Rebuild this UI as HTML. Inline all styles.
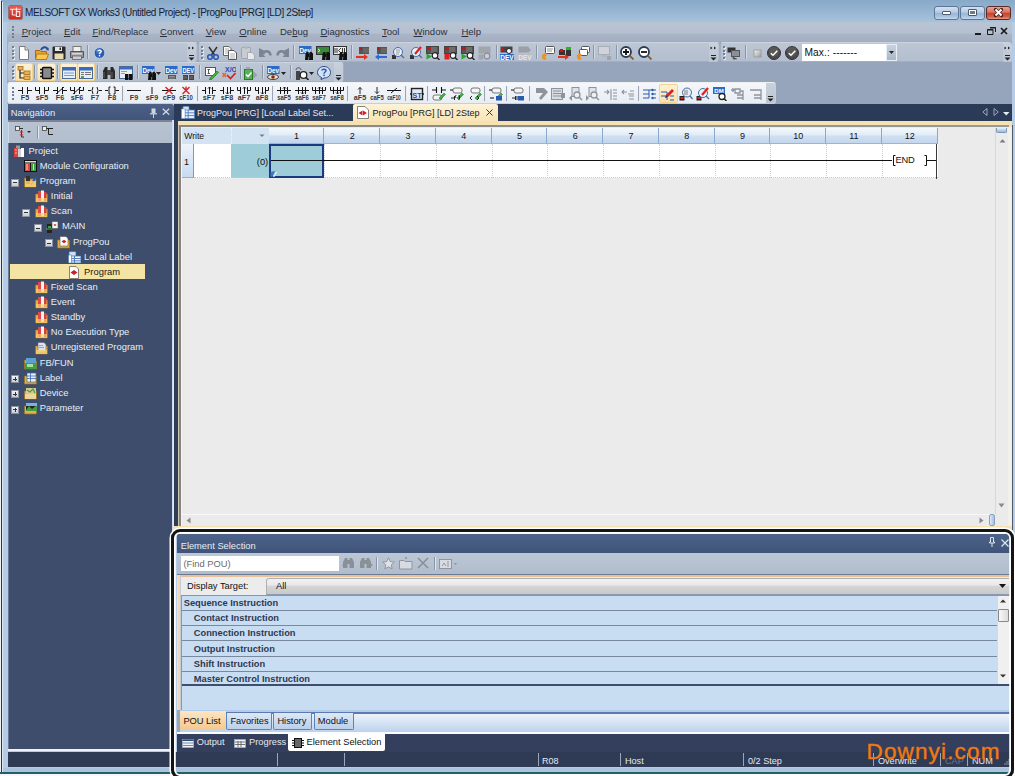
<!DOCTYPE html>
<html><head><meta charset="utf-8">
<style>
*{box-sizing:border-box;margin:0;padding:0}
html,body{width:1015px;height:776px;overflow:hidden;background:#fff}
body{font-family:"Liberation Sans",sans-serif;font-size:9.5px;color:#000;position:relative}
.a{position:absolute}
.t{position:absolute;white-space:nowrap;line-height:1}
svg{shape-rendering:geometricPrecision}
</style></head><body>
<div class="a" style="left:0px;top:0px;width:1015px;height:776px;background:#b4cce5"></div>
<div class="a" style="left:0px;top:0px;width:1015px;height:22px;background:linear-gradient(#88a9c8,#96b5d3 50%,#a6c3dd)"></div>
<div class="a" style="left:0px;top:0px;width:1px;height:776px;background:#eef2f6"></div>
<div class="a" style="left:1px;top:1px;width:1px;height:774px;background:#2e3440"></div>
<div class="a" style="left:2px;top:2px;width:1px;height:772px;background:#dfe9f4"></div>
<div class="a" style="left:9px;top:6px;width:13px;height:13px;background:linear-gradient(#e85a50,#c82a20);border-radius:1px;box-shadow:0 0 0 0.5px #8a2a20"></div>
<svg class="a" style="left:9px;top:6px" width="13" height="13" viewBox="0 0 13 13"><path d="M1 3.3H11.8M3.3 3.3V9M3.3 9H6.7M7.4 1.6V11M7.4 5.6H10.7V10.5H7.4" stroke="#ffe8e8" stroke-width="1.1" fill="none"/></svg>
<div class="t" style="left:25px;top:7.64px;font-size:10px;color:#1a2030;letter-spacing:-0.36px">MELSOFT GX Works3 (Untitled Project) - [ProgPou [PRG] [LD] 2Step]</div>
<div class="a" style="left:934px;top:6px;width:25px;height:14px;border:1px solid #5e7696;border-radius:3px;background:linear-gradient(#d3e2f2,#b5cbe5 45%,#98b4d6 50%,#a9c3e1 80%,#c5d8ee)"></div>
<div class="a" style="left:960px;top:6px;width:25px;height:14px;border:1px solid #5e7696;border-radius:3px;background:linear-gradient(#d3e2f2,#b5cbe5 45%,#98b4d6 50%,#a9c3e1 80%,#c5d8ee)"></div>
<div class="a" style="left:986px;top:6px;width:25px;height:14px;border:1px solid #5a2a26;border-radius:3px;background:linear-gradient(#eba496,#dd6e5c 45%,#c9402c 50%,#d45a44 80%,#e89a88)"></div>
<div class="a" style="left:942px;top:11px;width:9px;height:4px;background:#fff;border:1px solid #4a5a70;border-radius:1px"></div>
<div class="a" style="left:968px;top:9px;width:9px;height:7px;background:#fff;border:1px solid #4a5a70;border-radius:1px"></div>
<div class="a" style="left:970px;top:11px;width:5px;height:3px;background:#6a7a90"></div>
<svg class="a" style="left:993px;top:7px" width="11" height="11" viewBox="0 0 11 11"><path d="M2.5 2.5L8.5 8.5M8.5 2.5L2.5 8.5" stroke="#40201c" stroke-width="3.2" stroke-linecap="round"/><path d="M2.5 2.5L8.5 8.5M8.5 2.5L2.5 8.5" stroke="#fff" stroke-width="2"/></svg>
<div class="a" style="left:7px;top:22px;width:1005px;height:20px;background:linear-gradient(#bac5d4 0,#b4bfcf 55%,#a9b4c7 62%,#a4afc3 95%,#9ca8bc 100%);border-radius:2px 2px 0 0"></div>
<div class="a" style="left:12px;top:26.0px;width:2px;height:2px;background:#6f7f96"></div>
<div class="a" style="left:12px;top:29.4px;width:2px;height:2px;background:#6f7f96"></div>
<div class="a" style="left:12px;top:32.8px;width:2px;height:2px;background:#6f7f96"></div>
<div class="a" style="left:12px;top:36.2px;width:2px;height:2px;background:#6f7f96"></div>
<div class="t" style="left:21.7px;top:27.16px;font-size:9.5px;color:#283040"><u>P</u>roject</div>
<div class="t" style="left:64px;top:27.16px;font-size:9.5px;color:#283040"><u>E</u>dit</div>
<div class="t" style="left:92.4px;top:27.16px;font-size:9.5px;color:#283040"><u>F</u>ind/Replace</div>
<div class="t" style="left:160px;top:27.16px;font-size:9.5px;color:#283040"><u>C</u>onvert</div>
<div class="t" style="left:205.7px;top:27.16px;font-size:9.5px;color:#283040"><u>V</u>iew</div>
<div class="t" style="left:239.3px;top:27.16px;font-size:9.5px;color:#283040"><u>O</u>nline</div>
<div class="t" style="left:280px;top:27.16px;font-size:9.5px;color:#283040">De<u>b</u>ug</div>
<div class="t" style="left:320.4px;top:27.16px;font-size:9.5px;color:#283040"><u>D</u>iagnostics</div>
<div class="t" style="left:382px;top:27.16px;font-size:9.5px;color:#283040"><u>T</u>ool</div>
<div class="t" style="left:413.5px;top:27.16px;font-size:9.5px;color:#283040"><u>W</u>indow</div>
<div class="t" style="left:461.4px;top:27.16px;font-size:9.5px;color:#283040"><u>H</u>elp</div>
<div class="a" style="left:975px;top:33px;width:6px;height:2px;background:#1a1a1a"></div>
<svg class="a" style="left:987px;top:27px" width="9" height="8" viewBox="0 0 9 8"><path d="M3 0.5H8.5V5M0.5 2.5H6V7.5H0.5Z" stroke="#1a1a1a" stroke-width="1" fill="none"/><path d="M0.5 3H6M3 1H8.5" stroke="#1a1a1a" stroke-width="1.2"/></svg>
<svg class="a" style="left:1000px;top:27px" width="8" height="8" viewBox="0 0 8 8"><path d="M1 1L7 7M7 1L1 7" stroke="#1a1a1a" stroke-width="1.7"/></svg>
<div class="a" style="left:7px;top:42px;width:1005px;height:62px;background:#96a4bc"></div>
<div class="a" style="left:7px;top:42px;width:191px;height:20px;background:linear-gradient(#bcc6d5,#b3bece);border:1px solid #a4b0c2;border-top-color:#ccd4e0;border-radius:3px"></div>
<div class="a" style="left:12px;top:46.0px;width:2px;height:2px;background:#707f95;box-shadow:1px 1px 0 #e8eef5"></div>
<div class="a" style="left:12px;top:49.5px;width:2px;height:2px;background:#707f95;box-shadow:1px 1px 0 #e8eef5"></div>
<div class="a" style="left:12px;top:53.0px;width:2px;height:2px;background:#707f95;box-shadow:1px 1px 0 #e8eef5"></div>
<div class="a" style="left:12px;top:56.5px;width:2px;height:2px;background:#707f95;box-shadow:1px 1px 0 #e8eef5"></div>
<svg class="a" style="left:17px;top:46px" width="14" height="14" viewBox="0 0 14 14"><path d="M2.5 0.5H8L11.5 4V13.5H2.5Z" fill="#fff" stroke="#7a7a7a"/><path d="M8 0.5V4H11.5" fill="#ddd" stroke="#7a7a7a"/></svg>
<svg class="a" style="left:35px;top:46px" width="14" height="14" viewBox="0 0 14 14"><path d="M0.5 4.5H5L6 5.5H11.5V13.5H0.5Z" fill="#e8a030" stroke="#a86a10"/><path d="M2 8H13.5L11.5 13.5H0.5Z" fill="#f8c850" stroke="#b87a20"/><path d="M6 4C7 1 11 0 12.5 3" stroke="#2a4a9a" stroke-width="2" fill="none"/><path d="M11 4L13.8 4.5L13.5 1.5Z" fill="#2a4a9a"/></svg>
<svg class="a" style="left:52px;top:46px" width="14" height="14" viewBox="0 0 14 14"><rect x="0.5" y="0.5" width="13" height="13" rx="1" fill="#2a2a2a"/><rect x="3" y="1" width="7" height="4" fill="#e8e8e8"/><rect x="7.5" y="1.5" width="1.5" height="2.5" fill="#2a2a2a"/><rect x="2.5" y="7.5" width="9" height="5.5" fill="#e8dcb0"/></svg>
<svg class="a" style="left:70px;top:46px" width="14" height="14" viewBox="0 0 14 14"><rect x="3" y="0.5" width="8" height="5" fill="#f0f0f0" stroke="#777"/><path d="M0.5 5.5H13.5V11.5H0.5Z" fill="#9a9a9a" stroke="#555"/><rect x="2" y="7" width="10" height="1.5" fill="#d8d8d8"/><rect x="2.5" y="10" width="9" height="3.5" fill="#ccc" stroke="#666" stroke-width="0.8"/></svg>
<svg class="a" style="left:93px;top:46px" width="14" height="14" viewBox="0 0 14 14"><circle cx="6.5" cy="7" r="5.4" fill="#2a5cb0" stroke="#c8d8f0" stroke-width="0.8"/><circle cx="5.8" cy="5.5" r="2.8" fill="#5a90e0" opacity="0.5"/><path d="M4.8 5.3C4.8 3.8 8.2 3.8 8.2 5.3C8.2 6.6 6.5 6.6 6.5 8.2" stroke="#fff" stroke-width="1.4" fill="none"/><rect x="5.8" y="9" width="1.4" height="1.4" fill="#fff"/></svg>
<div class="a" style="left:87px;top:45px;width:1px;height:14px;background:#8a96a8;box-shadow:1px 0 0 rgba(230,236,244,0.55)"></div>
<div class="a" style="left:187px;top:43px;width:9px;height:19px;background:linear-gradient(#c8d0dc,#bcc6d4);border-radius:0 2px 2px 0"></div>
<svg class="a" style="left:188px;top:46px" width="7" height="4" viewBox="0 0 7 4"><path d="M0.5 0.5L2.5 2L0.5 3.5ZM4 0.5L6 2L4 3.5Z" fill="#222"/></svg>
<svg class="a" style="left:188px;top:55px" width="7" height="6" viewBox="0 0 7 6"><path d="M1 0.5H6" stroke="#222"/><path d="M0.5 2.5H6.5L3.5 5.5Z" fill="#222"/></svg>
<div class="a" style="left:198px;top:42px;width:522px;height:20px;background:linear-gradient(#bcc6d5,#b3bece);border:1px solid #a4b0c2;border-top-color:#ccd4e0;border-radius:3px"></div>
<div class="a" style="left:201px;top:46.0px;width:2px;height:2px;background:#707f95;box-shadow:1px 1px 0 #e8eef5"></div>
<div class="a" style="left:201px;top:49.5px;width:2px;height:2px;background:#707f95;box-shadow:1px 1px 0 #e8eef5"></div>
<div class="a" style="left:201px;top:53.0px;width:2px;height:2px;background:#707f95;box-shadow:1px 1px 0 #e8eef5"></div>
<div class="a" style="left:201px;top:56.5px;width:2px;height:2px;background:#707f95;box-shadow:1px 1px 0 #e8eef5"></div>
<svg class="a" style="left:206px;top:46px" width="14" height="14" viewBox="0 0 14 14"><path d="M3 1L8.5 9M11 1L5.5 9" stroke="#333" stroke-width="1.5"/><circle cx="4" cy="11" r="2.3" fill="none" stroke="#2a5ab8" stroke-width="1.6"/><circle cx="10" cy="11" r="2.3" fill="none" stroke="#2a5ab8" stroke-width="1.6"/></svg>
<svg class="a" style="left:223px;top:46px" width="14" height="14" viewBox="0 0 14 14"><path d="M0.5 0.5H6L8 2.5V9.5H0.5Z" fill="#fff" stroke="#666"/><path d="M5.5 4.5H11L13.5 7V13.5H5.5Z" fill="#fff" stroke="#555"/><path d="M7 8H12M7 10H12M7 12H12M2 3H6M2 5H6M2 7H5" stroke="#999" stroke-width="0.8"/></svg>
<svg class="a" style="left:241px;top:46px" width="14" height="14" viewBox="0 0 14 14"><rect x="0.5" y="1.5" width="9" height="11" rx="1" fill="#c8ccd2" stroke="#a0a4aa"/><rect x="3" y="0.5" width="4" height="2" fill="#b0b4ba"/><path d="M6.5 6.5H11L13.5 9V13.5H6.5Z" fill="#e8eaec" stroke="#a8acb2"/></svg>
<svg class="a" style="left:258px;top:46px" width="14" height="14" viewBox="0 0 14 14"><path d="M1 2L1 11H7.5L4.5 8C6 5 9.5 4.5 11.5 7.5" fill="#7c8492"/><path d="M5 8.5C6 4 12 4 12.5 9.5" stroke="#7c8492" stroke-width="2.6" fill="none"/></svg>
<svg class="a" style="left:276px;top:46px" width="14" height="14" viewBox="0 0 14 14"><g transform="translate(14,0) scale(-1,1)"><path d="M1 2L1 11H7.5L4.5 8C6 5 9.5 4.5 11.5 7.5" fill="#7c8492"/><path d="M5 8.5C6 4 12 4 12.5 9.5" stroke="#7c8492" stroke-width="2.6" fill="none"/></g></svg>
<svg class="a" style="left:299px;top:46px" width="14" height="14" viewBox="0 0 14 14"><rect x="0" y="0" width="12.5" height="8" fill="#2a6ac8"/><text x="6.2" y="6.8" font-family="Liberation Sans" font-weight="700" font-size="7.2" fill="#fff" text-anchor="middle" textLength="11.5" lengthAdjust="spacingAndGlyphs">Dev</text><path d="M6.5 7.5L7.5 6H9.5V14H6ZM10.5 6H12.5L14 7.5V14H10Z" fill="#111"/><rect x="9" y="8" width="1.5" height="3" fill="#111"/></svg>
<svg class="a" style="left:316px;top:46px" width="14" height="14" viewBox="0 0 14 14"><rect x="0.5" y="0.5" width="13" height="8" fill="#3a8a3a" stroke="#333"/><path d="M2 3L4 4.5L2 6" stroke="#cfc" fill="none"/><path d="M6.5 7.5L7.5 6H9.5V14H6ZM10.5 6H12.5L14 7.5V14H10Z" fill="#111"/><rect x="9" y="8" width="1.5" height="3" fill="#111"/></svg>
<svg class="a" style="left:333px;top:46px" width="14" height="14" viewBox="0 0 14 14"><rect x="0.5" y="0.5" width="13" height="8" fill="#eee" stroke="#333"/><path d="M2 2V7M4 2V7M5.5 4.5L8 2M5.5 4.5L8 7M9.5 2V7M11.5 2V7" stroke="#222" stroke-width="0.9"/><path d="M6.5 7.5L7.5 6H9.5V14H6ZM10.5 6H12.5L14 7.5V14H10Z" fill="#111"/><rect x="9" y="8" width="1.5" height="3" fill="#111"/></svg>
<svg class="a" style="left:356px;top:46px" width="14" height="14" viewBox="0 0 14 14"><rect x="3" y="1" width="10" height="7" fill="#555"/><rect x="3" y="1" width="3" height="3" fill="#c01818"/><path d="M8 2V7M10 2V7M12 2V7" stroke="#888" stroke-width="0.7"/><path d="M0 10H8V8L12 11L8 14V12H0Z" fill="#e83020"/></svg>
<svg class="a" style="left:374px;top:46px" width="14" height="14" viewBox="0 0 14 14"><rect x="3" y="1" width="10" height="7" fill="#555"/><rect x="3" y="1" width="3" height="3" fill="#c01818"/><path d="M8 2V7M10 2V7M12 2V7" stroke="#888" stroke-width="0.7"/><path d="M13 10H5V8L1 11L5 14V12H13Z" fill="#2a6ad8"/></svg>
<svg class="a" style="left:391px;top:46px" width="14" height="14" viewBox="0 0 14 14"><rect x="1" y="9" width="4" height="4" fill="#333"/><circle cx="7" cy="6" r="4.5" fill="#e8eef8" stroke="#4a6aa0"/><path d="M5 4H9M5 6H9M5 8H8" stroke="#888" stroke-width="0.8"/><path d="M10 9L13 12" stroke="#4a6aa0" stroke-width="1.2"/></svg>
<svg class="a" style="left:409px;top:46px" width="14" height="14" viewBox="0 0 14 14"><rect x="1" y="9" width="4" height="4" fill="#333"/><circle cx="7" cy="6" r="4.5" fill="#e8eef8" stroke="#4a6aa0"/><path d="M6 8L12 1" stroke="#e02020" stroke-width="2.2"/><path d="M10 9L13 12" stroke="#4a6aa0" stroke-width="1.2"/></svg>
<svg class="a" style="left:426px;top:46px" width="14" height="14" viewBox="0 0 14 14"><rect x="0.5" y="0.5" width="12" height="7" fill="#555" stroke="#444"/><rect x="1" y="1" width="4" height="3" fill="#c01818"/><path d="M6 1V7M8 1V7M10 1V7" stroke="#999" stroke-width="0.7"/><circle cx="9" cy="9.5" r="2.8" fill="#fff" stroke="#222" stroke-width="1.2"/><path d="M11 11.5L13.5 14" stroke="#222" stroke-width="1.4"/><path d="M0.5 7.5L6 10.5L0.5 13.5Z" fill="#30a030"/></svg>
<svg class="a" style="left:444px;top:46px" width="14" height="14" viewBox="0 0 14 14"><rect x="0.5" y="0.5" width="12" height="7" fill="#555" stroke="#444"/><rect x="1" y="1" width="4" height="3" fill="#c01818"/><path d="M6 1V7M8 1V7M10 1V7" stroke="#999" stroke-width="0.7"/><circle cx="9" cy="9.5" r="2.8" fill="#fff" stroke="#222" stroke-width="1.2"/><path d="M11 11.5L13.5 14" stroke="#222" stroke-width="1.4"/><rect x="0.5" y="8" width="5" height="5.5" fill="#e02020"/></svg>
<svg class="a" style="left:461px;top:46px" width="14" height="14" viewBox="0 0 14 14"><rect x="0.5" y="0.5" width="12" height="7" fill="#555" stroke="#444"/><rect x="1" y="1" width="4" height="3" fill="#c01818"/><path d="M6 1V7M8 1V7M10 1V7" stroke="#999" stroke-width="0.7"/><circle cx="9" cy="9.5" r="2.8" fill="#fff" stroke="#222" stroke-width="1.2"/><path d="M11 11.5L13.5 14" stroke="#222" stroke-width="1.4"/><path d="M0.5 7.5L6 10.5L0.5 13.5Z" fill="#30a030"/></svg>
<svg class="a" style="left:478px;top:46px" width="14" height="14" viewBox="0 0 14 14"><rect x="0.5" y="0.5" width="12" height="7" fill="#a0a6ae"/><rect x="0.5" y="8.5" width="5" height="5" fill="#a0a6ae"/><circle cx="9" cy="10" r="2.8" fill="#ccd" stroke="#8a8f98" stroke-width="1.2"/></svg>
<svg class="a" style="left:500px;top:46px" width="14" height="14" viewBox="0 0 14 14"><rect x="0.5" y="0.5" width="12" height="6" fill="#444"/><rect x="1" y="1" width="3" height="4" fill="#c01818"/><circle cx="9" cy="5" r="2.5" fill="#fff" stroke="#222"/><rect x="0" y="8" width="14" height="6" fill="#2a6ac8"/><text x="7" y="13.5" font-family="Liberation Sans" font-weight="700" font-size="6.5" fill="#fff" text-anchor="middle">DEV</text></svg>
<svg class="a" style="left:518px;top:46px" width="14" height="14" viewBox="0 0 14 14"><rect x="0.5" y="0.5" width="10" height="6" fill="#9aa0a8"/><path d="M10 1L13 4L10 7" fill="#9aa0a8"/><rect x="0" y="8" width="14" height="6" fill="#b8bcc4"/><text x="7" y="13.5" font-family="Liberation Sans" font-weight="700" font-size="6.5" fill="#e8e8e8" text-anchor="middle">DEV</text></svg>
<svg class="a" style="left:541px;top:46px" width="14" height="14" viewBox="0 0 14 14"><rect x="4.5" y="0.5" width="9" height="7" rx="1" fill="#fff" stroke="#555"/><path d="M6 3H12M6 5H11" stroke="#777" stroke-width="0.8"/><path d="M1 9L4 7L6 9L4 11L6 13L3 14L1 12Z" fill="#f09020"/></svg>
<svg class="a" style="left:558px;top:46px" width="14" height="14" viewBox="0 0 14 14"><rect x="1" y="4" width="6" height="5" fill="#333"/><rect x="2" y="3" width="3" height="3" fill="#c01818"/><rect x="8" y="2" width="5" height="8" fill="#333"/><path d="M8 1H13V4H8Z" fill="#30b030"/><path d="M0 10H7V8L11 11L7 14V12H0Z" fill="#e83020"/></svg>
<svg class="a" style="left:576px;top:46px" width="14" height="14" viewBox="0 0 14 14"><rect x="5.5" y="0.5" width="8" height="6" rx="1" fill="#fff" stroke="#555"/><rect x="3.5" y="3.5" width="8" height="6" rx="1" fill="#fff" stroke="#555"/><path d="M1 9L4 7L6 9L4 11L6 13L3 14L1 12Z" fill="#f09020"/></svg>
<svg class="a" style="left:598px;top:46px" width="14" height="14" viewBox="0 0 14 14"><rect x="0.5" y="0.5" width="11" height="8" fill="#d0d4da" stroke="#a8acb4"/><rect x="4" y="9" width="4" height="2" fill="#b0b4bc"/><rect x="9" y="10" width="4" height="4" fill="#a0a4ac"/></svg>
<svg class="a" style="left:620px;top:46px" width="14" height="14" viewBox="0 0 14 14"><circle cx="6" cy="6" r="5" fill="#fff" stroke="#2a3a5a" stroke-width="1.8"/><path d="M3 6H9M6 3V9" stroke="#111" stroke-width="1.8"/><path d="M9.5 9.5L13.5 13.5" stroke="#8a5a30" stroke-width="1.8"/></svg>
<svg class="a" style="left:638px;top:46px" width="14" height="14" viewBox="0 0 14 14"><circle cx="6" cy="6" r="5" fill="#fff" stroke="#2a3a5a" stroke-width="1.8"/><path d="M3 6H9" stroke="#111" stroke-width="1.8"/><path d="M9.5 9.5L13.5 13.5" stroke="#8a5a30" stroke-width="1.8"/></svg>
<div class="a" style="left:293px;top:45px;width:1px;height:14px;background:#8a96a8;box-shadow:1px 0 0 rgba(230,236,244,0.55)"></div>
<div class="a" style="left:351px;top:45px;width:1px;height:14px;background:#8a96a8;box-shadow:1px 0 0 rgba(230,236,244,0.55)"></div>
<div class="a" style="left:496px;top:45px;width:1px;height:14px;background:#8a96a8;box-shadow:1px 0 0 rgba(230,236,244,0.55)"></div>
<div class="a" style="left:536px;top:45px;width:1px;height:14px;background:#8a96a8;box-shadow:1px 0 0 rgba(230,236,244,0.55)"></div>
<div class="a" style="left:593px;top:45px;width:1px;height:14px;background:#8a96a8;box-shadow:1px 0 0 rgba(230,236,244,0.55)"></div>
<div class="a" style="left:616px;top:45px;width:1px;height:14px;background:#8a96a8;box-shadow:1px 0 0 rgba(230,236,244,0.55)"></div>
<div class="a" style="left:709px;top:43px;width:9px;height:19px;background:linear-gradient(#c8d0dc,#bcc6d4);border-radius:0 2px 2px 0"></div>
<svg class="a" style="left:710px;top:46px" width="7" height="4" viewBox="0 0 7 4"><path d="M0.5 0.5L2.5 2L0.5 3.5ZM4 0.5L6 2L4 3.5Z" fill="#222"/></svg>
<svg class="a" style="left:710px;top:55px" width="7" height="6" viewBox="0 0 7 6"><path d="M1 0.5H6" stroke="#222"/><path d="M0.5 2.5H6.5L3.5 5.5Z" fill="#222"/></svg>
<div class="a" style="left:720px;top:42px;width:292px;height:20px;background:linear-gradient(#bcc6d5,#b3bece);border:1px solid #a4b0c2;border-top-color:#ccd4e0;border-radius:3px"></div>
<div class="a" style="left:723px;top:46.0px;width:2px;height:2px;background:#707f95;box-shadow:1px 1px 0 #e8eef5"></div>
<div class="a" style="left:723px;top:49.5px;width:2px;height:2px;background:#707f95;box-shadow:1px 1px 0 #e8eef5"></div>
<div class="a" style="left:723px;top:53.0px;width:2px;height:2px;background:#707f95;box-shadow:1px 1px 0 #e8eef5"></div>
<div class="a" style="left:723px;top:56.5px;width:2px;height:2px;background:#707f95;box-shadow:1px 1px 0 #e8eef5"></div>
<svg class="a" style="left:727px;top:46px" width="14" height="14" viewBox="0 0 14 14"><rect x="0.5" y="1.5" width="8" height="5" fill="#333"/><rect x="4.5" y="4.5" width="8" height="6" fill="#8a9098" stroke="#555"/><path d="M6 11V13H10" stroke="#777"/></svg>
<div class="a" style="left:745px;top:45px;width:1px;height:14px;background:#8a96a8;box-shadow:1px 0 0 rgba(230,236,244,0.55)"></div>
<svg class="a" style="left:751px;top:46px" width="14" height="14" viewBox="0 0 14 14"><rect x="3" y="4" width="7" height="7" fill="url(#sqg)" stroke="#9a9a9a" stroke-width="0.8"/><defs><linearGradient id="sqg" x1="0" y1="0" x2="1" y2="1"><stop offset="0" stop-color="#f4f4f4"/><stop offset="1" stop-color="#9a9a9a"/></linearGradient></defs></svg>
<svg class="a" style="left:767px;top:46px" width="14" height="14" viewBox="0 0 14 14"><circle cx="7" cy="7" r="6.5" fill="#4a4a4a" stroke="#333"/><circle cx="7" cy="5.5" r="5" fill="#666" opacity="0.5"/><path d="M3.8 7.2L6 9.3L10.3 4.8" stroke="#fff" stroke-width="1.5" fill="none"/></svg>
<svg class="a" style="left:785px;top:46px" width="14" height="14" viewBox="0 0 14 14"><circle cx="7" cy="7" r="6.5" fill="#4a4a4a" stroke="#333"/><circle cx="7" cy="5.5" r="5" fill="#666" opacity="0.5"/><path d="M3.8 7.2L6 9.3L10.3 4.8" stroke="#fff" stroke-width="1.5" fill="none"/></svg>
<div class="a" style="left:802px;top:44px;width:95px;height:17px;background:#fff;border:1px solid #fff"></div>
<div class="t" style="left:804.5px;top:47.57px;font-size:10.2px;color:#111;letter-spacing:0.1px">Max.: -------</div>
<div class="a" style="left:886px;top:44px;width:11px;height:17px;background:linear-gradient(#c8d2e0,#aab6c8);border:1px solid #e8eef6"></div>
<svg class="a" style="left:889px;top:51px" width="5" height="3" viewBox="0 0 5 3"><path d="M0 0H5L2.5 3Z" fill="#222"/></svg>
<div class="a" style="left:1003px;top:43px;width:9px;height:19px;background:linear-gradient(#c8d0dc,#bcc6d4);border-radius:0 2px 2px 0"></div>
<svg class="a" style="left:1004px;top:46px" width="7" height="4" viewBox="0 0 7 4"><path d="M0.5 0.5L2.5 2L0.5 3.5ZM4 0.5L6 2L4 3.5Z" fill="#222"/></svg>
<svg class="a" style="left:1004px;top:55px" width="7" height="6" viewBox="0 0 7 6"><path d="M1 0.5H6" stroke="#222"/><path d="M0.5 2.5H6.5L3.5 5.5Z" fill="#222"/></svg>
<div class="a" style="left:7px;top:62px;width:337px;height:20px;background:linear-gradient(#bcc6d5,#b3bece);border:1px solid #a4b0c2;border-top-color:#ccd4e0;border-radius:3px"></div>
<div class="a" style="left:12px;top:66.0px;width:2px;height:2px;background:#707f95;box-shadow:1px 1px 0 #e8eef5"></div>
<div class="a" style="left:12px;top:69.5px;width:2px;height:2px;background:#707f95;box-shadow:1px 1px 0 #e8eef5"></div>
<div class="a" style="left:12px;top:73.0px;width:2px;height:2px;background:#707f95;box-shadow:1px 1px 0 #e8eef5"></div>
<div class="a" style="left:12px;top:76.5px;width:2px;height:2px;background:#707f95;box-shadow:1px 1px 0 #e8eef5"></div>
<div class="a" style="left:15px;top:63px;width:18px;height:18px;background:linear-gradient(#fdf1d6,#f8e2b0);border:1px solid #f0d490;border-radius:2px"></div>
<div class="a" style="left:37px;top:63px;width:19px;height:18px;background:linear-gradient(#fdf1d6,#f8e2b0);border:1px solid #f0d490;border-radius:2px"></div>
<div class="a" style="left:60px;top:63px;width:18px;height:18px;background:linear-gradient(#fdf1d6,#f8e2b0);border:1px solid #f0d490;border-radius:2px"></div>
<div class="a" style="left:77px;top:63px;width:18px;height:18px;background:linear-gradient(#fdf1d6,#f8e2b0);border:1px solid #f0d490;border-radius:2px"></div>
<svg class="a" style="left:17px;top:66px" width="14" height="14" viewBox="0 0 14 14"><rect x="1" y="0.5" width="5" height="3.5" fill="#e8b050" stroke="#a07020" stroke-width="0.8"/><path d="M3 4V12H7M3 7H7" stroke="#222" stroke-width="1.2" fill="none"/><rect x="7" y="5" width="6" height="3.5" fill="#e8b050" stroke="#a07020" stroke-width="0.8"/><rect x="7" y="10" width="6" height="3.5" fill="#e8b050" stroke="#a07020" stroke-width="0.8"/></svg>
<svg class="a" style="left:40px;top:66px" width="14" height="14" viewBox="0 0 14 14"><rect x="2.5" y="1.5" width="9" height="11" rx="1" fill="#8a8a8a" stroke="#111" stroke-width="1.4"/><path d="M0 3.5H2.5M0 7H2.5M0 10.5H2.5M11.5 3.5H14M11.5 7H14M11.5 10.5H14" stroke="#111" stroke-width="1.5"/></svg>
<svg class="a" style="left:62px;top:66px" width="14" height="14" viewBox="0 0 14 14"><rect x="0.5" y="1.5" width="13" height="11" fill="#e8eef6" stroke="#4a6a98"/><rect x="1" y="2" width="12" height="2.5" fill="#3a6ac0"/><path d="M2 7H12M2 9.5H12" stroke="#7a9ac8" stroke-width="1"/></svg>
<svg class="a" style="left:79px;top:66px" width="14" height="14" viewBox="0 0 14 14"><rect x="0.5" y="1.5" width="13" height="11" fill="#e8eef6" stroke="#4a6a98"/><rect x="1" y="2" width="12" height="2.5" fill="#3a6ac0"/><path d="M2 6.5H5M6 6.5H12M2 8.5H5M6 8.5H12M2 10.5H5" stroke="#666" stroke-width="0.9"/><rect x="2" y="10" width="3" height="2" fill="#6a9a4a"/></svg>
<svg class="a" style="left:102px;top:66px" width="14" height="14" viewBox="0 0 14 14"><path d="M1 5L3 1H5.5V13H1ZM8.5 1H11L13 5V13H8.5Z" fill="#2a2a2a"/><rect x="5" y="4" width="4" height="5" fill="#444"/><path d="M2 6V12M10 6V12" stroke="#666" stroke-width="1"/></svg>
<svg class="a" style="left:119px;top:66px" width="14" height="14" viewBox="0 0 14 14"><rect x="0.5" y="0.5" width="13" height="12" fill="#e8eef6" stroke="#4a6a98"/><rect x="1" y="1" width="12" height="2.5" fill="#3a6ac0"/><path d="M2 5.5H8M2 7.5H6" stroke="#888" stroke-width="0.8"/><path d="M6 8H9.5V14H6ZM10 8H13.5V14H10Z" fill="#111"/></svg>
<svg class="a" style="left:142px;top:66px" width="14" height="14" viewBox="0 0 14 14"><rect x="0" y="0" width="12.5" height="8" fill="#2a6ac8"/><text x="6.2" y="6.8" font-family="Liberation Sans" font-weight="700" font-size="7.2" fill="#fff" text-anchor="middle" textLength="11.5" lengthAdjust="spacingAndGlyphs">Dev</text><path d="M6.5 7.5L7.5 6H9.5V14H6ZM10.5 6H12.5L14 7.5V14H10Z" fill="#111"/><rect x="9" y="8" width="1.5" height="3" fill="#111"/></svg>
<svg class="a" style="left:165px;top:66px" width="14" height="14" viewBox="0 0 14 14"><rect x="0" y="0" width="12.5" height="8" fill="#2a6ac8"/><text x="6.2" y="6.8" font-family="Liberation Sans" font-weight="700" font-size="7.2" fill="#fff" text-anchor="middle" textLength="11.5" lengthAdjust="spacingAndGlyphs">Dev</text><rect x="3" y="9" width="8" height="4" fill="#555"/><path d="M4 10.5H10M4 12H10" stroke="#bbb" stroke-width="0.6"/></svg>
<svg class="a" style="left:182px;top:66px" width="14" height="14" viewBox="0 0 14 14"><rect x="0" y="0" width="12.5" height="8" fill="#2a6ac8"/><text x="6.2" y="6.8" font-family="Liberation Sans" font-weight="700" font-size="7.2" fill="#fff" text-anchor="middle" textLength="11.5" lengthAdjust="spacingAndGlyphs">DEV</text><rect x="1" y="9" width="5" height="5" fill="#444"/><rect x="7" y="9" width="5" height="5" fill="#444"/><path d="M2 10V13M4 10V13M8 10V13M10 10V13" stroke="#999" stroke-width="0.6"/></svg>
<svg class="a" style="left:205px;top:66px" width="14" height="14" viewBox="0 0 14 14"><rect x="0.5" y="1.5" width="10" height="8" fill="#fff" stroke="#555"/><path d="M2.5 3.5H5M3.5 3.5V7.5M2.5 7.5H5" stroke="#333" stroke-width="0.8"/><path d="M5 12L12 5L13.5 6.5L6.5 13.5L4.5 14Z" fill="#40b040" stroke="#1a6a1a" stroke-width="0.6"/></svg>
<svg class="a" style="left:222px;top:66px" width="14" height="14" viewBox="0 0 14 14"><text x="9" y="6" font-family="Liberation Sans" font-weight="700" font-size="7" fill="#2a4ab0" text-anchor="middle">X/O</text><path d="M0.5 7L4 11M4 7L0.5 11" stroke="#f06020" stroke-width="1.5"/><path d="M5 9L8.5 12.5L13.5 7" stroke="#d82020" stroke-width="1.7" fill="none"/></svg>
<svg class="a" style="left:244px;top:66px" width="14" height="14" viewBox="0 0 14 14"><rect x="0.5" y="3.5" width="8" height="10" fill="#5ab05a" stroke="#2a7a2a"/><path d="M3 1V4M5 1V4" stroke="#888" stroke-width="1"/><path d="M2 8.5L4 10.5L7.5 6.5" stroke="#fff" stroke-width="1.5" fill="none"/><path d="M9 5L13.5 9L9 13" fill="#9aa0a8"/></svg>
<svg class="a" style="left:267px;top:66px" width="14" height="14" viewBox="0 0 14 14"><rect x="0" y="0" width="12.5" height="8" fill="#2a6ac8"/><text x="6.2" y="6.8" font-family="Liberation Sans" font-weight="700" font-size="7.2" fill="#fff" text-anchor="middle" textLength="11.5" lengthAdjust="spacingAndGlyphs">Dev</text><ellipse cx="6" cy="11" rx="5.5" ry="2.5" fill="#f0e0d0" stroke="#444"/><circle cx="6" cy="11" r="1.8" fill="#8a2a1a"/></svg>
<svg class="a" style="left:295px;top:66px" width="14" height="14" viewBox="0 0 14 14"><path d="M1 4C1 1 6 1 6 4" stroke="#555" fill="none"/><rect x="1" y="5" width="4" height="9" fill="#444"/><circle cx="8.5" cy="9" r="3.3" fill="#fff" stroke="#222" stroke-width="1.3"/><path d="M11 11.5L13.5 14" stroke="#222" stroke-width="1.6"/></svg>
<svg class="a" style="left:317px;top:66px" width="14" height="14" viewBox="0 0 14 14"><path d="M7 0.5C10.5 0.5 13.5 3 13.5 6.5C13.5 10 10.5 12 7 12L4 13.5L4.5 11.5C2 10.5 0.5 8.5 0.5 6.5C0.5 3 3.5 0.5 7 0.5Z" fill="#cfe2f8" stroke="#2a4a80"/><path d="M5 4.5C5 2.8 9 2.8 9 4.5C9 6 7 6 7 7.8" stroke="#2a5ab0" stroke-width="1.5" fill="none"/><rect x="6.3" y="8.6" width="1.5" height="1.5" fill="#2a5ab0"/></svg>
<div class="a" style="left:34px;top:65px;width:1px;height:14px;background:#8a96a8;box-shadow:1px 0 0 rgba(230,236,244,0.55)"></div>
<div class="a" style="left:57px;top:65px;width:1px;height:14px;background:#8a96a8;box-shadow:1px 0 0 rgba(230,236,244,0.55)"></div>
<div class="a" style="left:97px;top:65px;width:1px;height:14px;background:#8a96a8;box-shadow:1px 0 0 rgba(230,236,244,0.55)"></div>
<div class="a" style="left:137px;top:65px;width:1px;height:14px;background:#8a96a8;box-shadow:1px 0 0 rgba(230,236,244,0.55)"></div>
<div class="a" style="left:199px;top:65px;width:1px;height:14px;background:#8a96a8;box-shadow:1px 0 0 rgba(230,236,244,0.55)"></div>
<div class="a" style="left:240px;top:65px;width:1px;height:14px;background:#8a96a8;box-shadow:1px 0 0 rgba(230,236,244,0.55)"></div>
<div class="a" style="left:262px;top:65px;width:1px;height:14px;background:#8a96a8;box-shadow:1px 0 0 rgba(230,236,244,0.55)"></div>
<div class="a" style="left:290px;top:65px;width:1px;height:14px;background:#8a96a8;box-shadow:1px 0 0 rgba(230,236,244,0.55)"></div>
<svg class="a" style="left:156px;top:72px" width="5" height="3" viewBox="0 0 5 3"><path d="M0 0H5L2.5 3Z" fill="#222"/></svg>
<svg class="a" style="left:281px;top:72px" width="5" height="3" viewBox="0 0 5 3"><path d="M0 0H5L2.5 3Z" fill="#222"/></svg>
<svg class="a" style="left:309px;top:72px" width="5" height="3" viewBox="0 0 5 3"><path d="M0 0H5L2.5 3Z" fill="#222"/></svg>
<div class="a" style="left:334px;top:63px;width:9px;height:19px;background:linear-gradient(#c8d0dc,#bcc6d4);border-radius:0 2px 2px 0"></div>
<svg class="a" style="left:335px;top:75px" width="7" height="6" viewBox="0 0 7 6"><path d="M1 0.5H6" stroke="#222"/><path d="M0.5 2.5H6.5L3.5 5.5Z" fill="#222"/></svg>
<div class="a" style="left:7px;top:82px;width:769px;height:22px;background:linear-gradient(#f4f7fb,#e8edf4);border:1px solid #d8cfae;border-top-color:#f0f0f0;border-radius:3px"></div>
<div class="a" style="left:12px;top:87.0px;width:2px;height:2px;background:#707f95;box-shadow:1px 1px 0 #e8eef5"></div>
<div class="a" style="left:12px;top:90.5px;width:2px;height:2px;background:#707f95;box-shadow:1px 1px 0 #e8eef5"></div>
<div class="a" style="left:12px;top:94.0px;width:2px;height:2px;background:#707f95;box-shadow:1px 1px 0 #e8eef5"></div>
<div class="a" style="left:12px;top:97.5px;width:2px;height:2px;background:#707f95;box-shadow:1px 1px 0 #e8eef5"></div>
<svg class="a" style="left:18px;top:86px" width="14" height="9" viewBox="0 0 14 9"><path d="M0 4.5H4M4.5 1V8M9.5 1V8M10 4.5H14" stroke="#151515" stroke-width="1.0" fill="none"/></svg>
<svg class="a" style="left:15px;top:93.2px" width="20" height="8" viewBox="0 0 20 8"><text x="10" y="6.9" font-family="Liberation Sans" font-weight="700" font-size="7.2" fill="#3a3a3a" text-anchor="middle">F5</text></svg>
<svg class="a" style="left:35px;top:86px" width="14" height="9" viewBox="0 0 14 9"><path d="M0.5 1V4.5H4M4.5 1V8M9.5 1V8M10 4.5H13.5V1" stroke="#151515" stroke-width="1.0" fill="none"/></svg>
<svg class="a" style="left:32px;top:93.2px" width="20" height="8" viewBox="0 0 20 8"><text x="10" y="6.9" font-family="Liberation Sans" font-weight="700" font-size="7.2" fill="#3a3a3a" text-anchor="middle">sF5</text></svg>
<svg class="a" style="left:53px;top:86px" width="14" height="9" viewBox="0 0 14 9"><path d="M0 4.5H4M4.5 1V8M9.5 1V8M10 4.5H14M3 8L11 1" stroke="#151515" stroke-width="1.0" fill="none"/></svg>
<svg class="a" style="left:50px;top:93.2px" width="20" height="8" viewBox="0 0 20 8"><text x="10" y="6.9" font-family="Liberation Sans" font-weight="700" font-size="7.2" fill="#3a3a3a" text-anchor="middle">F6</text></svg>
<svg class="a" style="left:70px;top:86px" width="14" height="9" viewBox="0 0 14 9"><path d="M0.5 1V4.5H4M4.5 1V8M9.5 1V8M10 4.5H13.5V1M3 8L11 1" stroke="#151515" stroke-width="1.0" fill="none"/></svg>
<svg class="a" style="left:67px;top:93.2px" width="20" height="8" viewBox="0 0 20 8"><text x="10" y="6.9" font-family="Liberation Sans" font-weight="700" font-size="7.2" fill="#3a3a3a" text-anchor="middle">sF6</text></svg>
<svg class="a" style="left:88px;top:86px" width="14" height="9" viewBox="0 0 14 9"><path d="M0 4.5H3M5 1Q3 4.5 5 8M9 1Q11 4.5 9 8M11 4.5H14" stroke="#151515" stroke-width="1.0" fill="none"/></svg>
<svg class="a" style="left:85px;top:93.2px" width="20" height="8" viewBox="0 0 20 8"><text x="10" y="6.9" font-family="Liberation Sans" font-weight="700" font-size="7.2" fill="#3a3a3a" text-anchor="middle">F7</text></svg>
<svg class="a" style="left:105px;top:86px" width="14" height="9" viewBox="0 0 14 9"><path d="M0 4.5H3M5.5 1H4V8H5.5M8.5 1H10V8H8.5M10.5 4.5H14" stroke="#151515" stroke-width="1.0" fill="none"/></svg>
<svg class="a" style="left:102px;top:93.2px" width="20" height="8" viewBox="0 0 20 8"><text x="10" y="6.9" font-family="Liberation Sans" font-weight="700" font-size="7.2" fill="#3a3a3a" text-anchor="middle">F8</text></svg>
<svg class="a" style="left:127px;top:86px" width="14" height="9" viewBox="0 0 14 9"><path d="M0 4.5H14" stroke="#151515" stroke-width="1.0" fill="none"/></svg>
<svg class="a" style="left:124px;top:93.2px" width="20" height="8" viewBox="0 0 20 8"><text x="10" y="6.9" font-family="Liberation Sans" font-weight="700" font-size="7.2" fill="#3a3a3a" text-anchor="middle">F9</text></svg>
<svg class="a" style="left:145px;top:86px" width="14" height="9" viewBox="0 0 14 9"><path d="M7 1V8" stroke="#151515" stroke-width="1.0" fill="none"/></svg>
<svg class="a" style="left:142px;top:93.2px" width="20" height="8" viewBox="0 0 20 8"><text x="10" y="6.9" font-family="Liberation Sans" font-weight="700" font-size="7.2" fill="#3a3a3a" text-anchor="middle">sF9</text></svg>
<svg class="a" style="left:162px;top:86px" width="14" height="9" viewBox="0 0 14 9"><path d="M0 4.5H14" stroke="#151515" stroke-width="1.0" fill="none"/><path d="M3.5 1L10.5 8M10.5 1L3.5 8" stroke="#e02020" stroke-width="1.4" fill="none"/></svg>
<svg class="a" style="left:159px;top:93.2px" width="20" height="8" viewBox="0 0 20 8"><text x="10" y="6.9" font-family="Liberation Sans" font-weight="700" font-size="7.2" fill="#3a3a3a" text-anchor="middle">cF9</text></svg>
<svg class="a" style="left:179px;top:86px" width="14" height="9" viewBox="0 0 14 9"><path d="M3.5 1L10.5 8M10.5 1L3.5 8M7 0.5V5" stroke="#e02020" stroke-width="1.4" fill="none"/></svg>
<svg class="a" style="left:176px;top:93.2px" width="20" height="8" viewBox="0 0 20 8"><text x="10" y="6.9" font-family="Liberation Sans" font-weight="700" font-size="7.2" fill="#3a3a3a" text-anchor="middle" textLength="13.6" lengthAdjust="spacingAndGlyphs">cF10</text></svg>
<svg class="a" style="left:202px;top:86px" width="14" height="9" viewBox="0 0 14 9"><path d="M0 4.5H3M3.5 1V8M10.5 1V8M11 4.5H14M7.5 1V8M6 2.5L7.5 1L9 2.5" stroke="#151515" stroke-width="1.0" fill="none"/></svg>
<svg class="a" style="left:199px;top:93.2px" width="20" height="8" viewBox="0 0 20 8"><text x="10" y="6.9" font-family="Liberation Sans" font-weight="700" font-size="7.2" fill="#3a3a3a" text-anchor="middle">sF7</text></svg>
<svg class="a" style="left:220px;top:86px" width="14" height="9" viewBox="0 0 14 9"><path d="M0 4.5H3M3.5 1V8M10.5 1V8M11 4.5H14M7.5 1V8M6 6.5L7.5 8L9 6.5" stroke="#151515" stroke-width="1.0" fill="none"/></svg>
<svg class="a" style="left:217px;top:93.2px" width="20" height="8" viewBox="0 0 20 8"><text x="10" y="6.9" font-family="Liberation Sans" font-weight="700" font-size="7.2" fill="#3a3a3a" text-anchor="middle">sF8</text></svg>
<svg class="a" style="left:237px;top:86px" width="14" height="9" viewBox="0 0 14 9"><path d="M0.5 1V4.5H3M3.5 1V8M10.5 1V8M11 4.5H13.5V1M7.5 1V8M6 2.5L7.5 1L9 2.5" stroke="#151515" stroke-width="1.0" fill="none"/></svg>
<svg class="a" style="left:234px;top:93.2px" width="20" height="8" viewBox="0 0 20 8"><text x="10" y="6.9" font-family="Liberation Sans" font-weight="700" font-size="7.2" fill="#3a3a3a" text-anchor="middle">aF7</text></svg>
<svg class="a" style="left:255px;top:86px" width="14" height="9" viewBox="0 0 14 9"><path d="M0.5 1V4.5H3M3.5 1V8M10.5 1V8M11 4.5H13.5V1M7.5 1V8M6 6.5L7.5 8L9 6.5" stroke="#151515" stroke-width="1.0" fill="none"/></svg>
<svg class="a" style="left:252px;top:93.2px" width="20" height="8" viewBox="0 0 20 8"><text x="10" y="6.9" font-family="Liberation Sans" font-weight="700" font-size="7.2" fill="#3a3a3a" text-anchor="middle">aF8</text></svg>
<svg class="a" style="left:277px;top:86px" width="14" height="9" viewBox="0 0 14 9"><path d="M0 4.5H14M3.5 1V8M10.5 1V8M7.5 1V8M6 2.5L7.5 1L9 2.5" stroke="#151515" stroke-width="1.0" fill="none"/></svg>
<svg class="a" style="left:274px;top:93.2px" width="20" height="8" viewBox="0 0 20 8"><text x="10" y="6.9" font-family="Liberation Sans" font-weight="700" font-size="7.2" fill="#3a3a3a" text-anchor="middle" textLength="13.6" lengthAdjust="spacingAndGlyphs">saF5</text></svg>
<svg class="a" style="left:295px;top:86px" width="14" height="9" viewBox="0 0 14 9"><path d="M0 4.5H14M3.5 1V8M10.5 1V8M7.5 1V8M6 6.5L7.5 8L9 6.5" stroke="#151515" stroke-width="1.0" fill="none"/></svg>
<svg class="a" style="left:292px;top:93.2px" width="20" height="8" viewBox="0 0 20 8"><text x="10" y="6.9" font-family="Liberation Sans" font-weight="700" font-size="7.2" fill="#3a3a3a" text-anchor="middle" textLength="13.6" lengthAdjust="spacingAndGlyphs">saF6</text></svg>
<svg class="a" style="left:312px;top:86px" width="14" height="9" viewBox="0 0 14 9"><path d="M0.5 1V4.5H13.5V1M3.5 1V8M10.5 1V8M7.5 1V8M6 2.5L7.5 1L9 2.5" stroke="#151515" stroke-width="1.0" fill="none"/></svg>
<svg class="a" style="left:309px;top:93.2px" width="20" height="8" viewBox="0 0 20 8"><text x="10" y="6.9" font-family="Liberation Sans" font-weight="700" font-size="7.2" fill="#3a3a3a" text-anchor="middle" textLength="13.6" lengthAdjust="spacingAndGlyphs">saF7</text></svg>
<svg class="a" style="left:330px;top:86px" width="14" height="9" viewBox="0 0 14 9"><path d="M0.5 1V4.5H13.5V1M3.5 1V8M10.5 1V8M7.5 1V8M6 6.5L7.5 8L9 6.5" stroke="#151515" stroke-width="1.0" fill="none"/></svg>
<svg class="a" style="left:327px;top:93.2px" width="20" height="8" viewBox="0 0 20 8"><text x="10" y="6.9" font-family="Liberation Sans" font-weight="700" font-size="7.2" fill="#3a3a3a" text-anchor="middle" textLength="13.6" lengthAdjust="spacingAndGlyphs">saF8</text></svg>
<svg class="a" style="left:353px;top:86px" width="14" height="9" viewBox="0 0 14 9"><path d="M7 1.5V8M5 3.5L7 1.5L9 3.5" stroke="#111" stroke-width="0.9" fill="none"/></svg>
<svg class="a" style="left:350px;top:93.2px" width="20" height="8" viewBox="0 0 20 8"><text x="10" y="6.9" font-family="Liberation Sans" font-weight="700" font-size="7.2" fill="#3a3a3a" text-anchor="middle">aF5</text></svg>
<svg class="a" style="left:370px;top:86px" width="14" height="9" viewBox="0 0 14 9"><path d="M7 1V7.5M5 5.5L7 7.5L9 5.5" stroke="#111" stroke-width="0.9" fill="none"/></svg>
<svg class="a" style="left:367px;top:93.2px" width="20" height="8" viewBox="0 0 20 8"><text x="10" y="6.9" font-family="Liberation Sans" font-weight="700" font-size="7.2" fill="#3a3a3a" text-anchor="middle" textLength="13.6" lengthAdjust="spacingAndGlyphs">caF5</text></svg>
<svg class="a" style="left:387px;top:86px" width="14" height="9" viewBox="0 0 14 9"><path d="M0 4.5H14M4 7L10 2" stroke="#151515" stroke-width="1.0" fill="none"/></svg>
<svg class="a" style="left:384px;top:93.2px" width="20" height="8" viewBox="0 0 20 8"><text x="10" y="6.9" font-family="Liberation Sans" font-weight="700" font-size="7.2" fill="#3a3a3a" text-anchor="middle" textLength="13.6" lengthAdjust="spacingAndGlyphs">caF10</text></svg>
<div class="a" style="left:122px;top:86px;width:1px;height:15px;background:#9aa4b4;box-shadow:1px 0 0 rgba(230,236,244,0.55)"></div>
<div class="a" style="left:197px;top:86px;width:1px;height:15px;background:#9aa4b4;box-shadow:1px 0 0 rgba(230,236,244,0.55)"></div>
<div class="a" style="left:272px;top:86px;width:1px;height:15px;background:#9aa4b4;box-shadow:1px 0 0 rgba(230,236,244,0.55)"></div>
<div class="a" style="left:347px;top:86px;width:1px;height:15px;background:#9aa4b4;box-shadow:1px 0 0 rgba(230,236,244,0.55)"></div>
<div class="a" style="left:405px;top:86px;width:1px;height:15px;background:#9aa4b4;box-shadow:1px 0 0 rgba(230,236,244,0.55)"></div>
<div class="a" style="left:427px;top:86px;width:1px;height:15px;background:#9aa4b4;box-shadow:1px 0 0 rgba(230,236,244,0.55)"></div>
<div class="a" style="left:484px;top:86px;width:1px;height:15px;background:#9aa4b4;box-shadow:1px 0 0 rgba(230,236,244,0.55)"></div>
<div class="a" style="left:506px;top:86px;width:1px;height:15px;background:#9aa4b4;box-shadow:1px 0 0 rgba(230,236,244,0.55)"></div>
<div class="a" style="left:529px;top:86px;width:1px;height:15px;background:#9aa4b4;box-shadow:1px 0 0 rgba(230,236,244,0.55)"></div>
<div class="a" style="left:638px;top:86px;width:1px;height:15px;background:#9aa4b4;box-shadow:1px 0 0 rgba(230,236,244,0.55)"></div>
<svg class="a" style="left:410px;top:87px" width="14" height="14" viewBox="0 0 14 14"><rect x="1.5" y="1.5" width="11" height="11" fill="#dfe8f4" stroke="#222" stroke-width="1.4"/><path d="M0 7H1.5M12.5 7H14" stroke="#222" stroke-width="1.5"/><text x="7" y="10.5" font-family="Liberation Sans" font-weight="700" font-size="7.5" fill="#2a4ab0" text-anchor="middle">ST</text></svg>
<svg class="a" style="left:432px;top:87px" width="14" height="14" viewBox="0 0 14 14"><path d="M0 3H4M4.5 0V6M9.5 0V6M10 3H14" stroke="#111" stroke-width="1.1" fill="none"/><rect x="1" y="8" width="9" height="5" rx="2" fill="#f4f4f4" stroke="#555" stroke-width="0.8"/><path d="M7 11L12 6L13.5 7.5L8.5 12.5Z" fill="#40b040" stroke="#1a6a1a" stroke-width="0.5"/></svg>
<svg class="a" style="left:450px;top:87px" width="14" height="14" viewBox="0 0 14 14"><rect x="3" y="1" width="9" height="5" rx="2" fill="#f4f4f4" stroke="#555" stroke-width="0.8"/><path d="M0 3H3" stroke="#111"/><path d="M7 11L12 6L13.5 7.5L8.5 12.5Z" fill="#40b040" stroke="#1a6a1a" stroke-width="0.5"/><path d="M1 11H4M4.5 9V13M6 11Q5 9.5 6 8M9 8Q10 9.5 9 13" stroke="#111" stroke-width="0.9" fill="none"/></svg>
<svg class="a" style="left:468px;top:87px" width="14" height="14" viewBox="0 0 14 14"><rect x="3" y="1" width="9" height="5" rx="2" fill="#f4f4f4" stroke="#555" stroke-width="0.8"/><path d="M7 11L12 6L13.5 7.5L8.5 12.5Z" fill="#40b040" stroke="#1a6a1a" stroke-width="0.5"/><path d="M2 11L4 9M2 11L4 13M9 9L11 11L9 13" stroke="#111" stroke-width="0.9" fill="none"/></svg>
<svg class="a" style="left:489px;top:87px" width="14" height="14" viewBox="0 0 14 14"><rect x="3" y="1" width="9" height="5" rx="2" fill="#f4f4f4" stroke="#555" stroke-width="0.8"/><path d="M0 3H3" stroke="#111"/><path d="M7 11L12 6L13.5 7.5L8.5 12.5Z" fill="#40b040" stroke="#1a6a1a" stroke-width="0.5"/><path d="M1 11H5" stroke="#111"/><rect x="7" y="9" width="6" height="4.5" fill="#2a5ab0"/></svg>
<svg class="a" style="left:511px;top:87px" width="14" height="14" viewBox="0 0 14 14"><rect x="3" y="1" width="9" height="5" rx="2" fill="#f4f4f4" stroke="#555" stroke-width="0.8"/><path d="M0 3H3" stroke="#111"/><path d="M1 11H4M4.5 9V13M6 9V13" stroke="#111" stroke-width="0.9"/><rect x="7" y="9" width="6" height="4.5" fill="#2a5ab0"/></svg>
<svg class="a" style="left:535px;top:87px" width="14" height="14" viewBox="0 0 14 14"><path d="M1 1H9L13 5L6 13L4 11L8 6H1Z" fill="#8e949c"/></svg>
<svg class="a" style="left:551px;top:87px" width="14" height="14" viewBox="0 0 14 14"><rect x="0.5" y="1.5" width="11" height="11" fill="#d8dce2" stroke="#8e949c"/><path d="M2 4H10M2 6.5H10M2 9H10" stroke="#8e949c" stroke-width="1.2"/><rect x="10" y="6" width="4" height="5" fill="#8e949c"/></svg>
<svg class="a" style="left:569px;top:87px" width="14" height="14" viewBox="0 0 14 14"><rect x="3" y="0.5" width="7" height="9" fill="#e0e4ea" stroke="#8e949c"/><circle cx="8" cy="8" r="3" fill="#f0f0f0" stroke="#8e949c" stroke-width="1.3"/><path d="M10 10L13 13" stroke="#8e949c" stroke-width="1.5"/><path d="M3 8L0 11L3 14Z" fill="#8e949c"/></svg>
<svg class="a" style="left:586px;top:87px" width="14" height="14" viewBox="0 0 14 14"><rect x="3" y="0.5" width="7" height="9" fill="#e0e4ea" stroke="#8e949c"/><circle cx="8" cy="8" r="3" fill="#f0f0f0" stroke="#8e949c" stroke-width="1.3"/><path d="M10 10L13 13" stroke="#8e949c" stroke-width="1.5"/><path d="M0 8L3 11L0 14Z" fill="#8e949c"/></svg>
<svg class="a" style="left:604px;top:87px" width="14" height="14" viewBox="0 0 14 14"><path d="M0 5H5M3 3L5 5L3 7M7 2V13M9 3H13M9 6H13M9 9H13M9 12H13" stroke="#8e949c" stroke-width="1.1" fill="none"/></svg>
<svg class="a" style="left:621px;top:87px" width="14" height="14" viewBox="0 0 14 14"><path d="M1 5H6M3 3L1 5L3 7M7 7H13M8 9H13M8 12H13M9 4H13" stroke="#8e949c" stroke-width="1.1" fill="none"/></svg>
<svg class="a" style="left:643px;top:87px" width="14" height="14" viewBox="0 0 14 14"><path d="M0 3H6M0 7H6M0 11H6M6 3H9M6 3V11M9 3H13M9 7H13M9 11H13" stroke="#2a5ab0" stroke-width="1" fill="none"/><circle cx="9.5" cy="3" r="1.2" fill="#2a5ab0"/><circle cx="9.5" cy="7" r="1.2" fill="#2a5ab0"/><circle cx="9.5" cy="11" r="1.2" fill="#2a5ab0"/></svg>
<div class="a" style="left:659px;top:84px;width:19px;height:19px;background:linear-gradient(#fdf1d6,#f8e2b0);border:1px solid #f0d490;border-radius:2px"></div>
<svg class="a" style="left:661px;top:87px" width="14" height="14" viewBox="0 0 14 14"><path d="M0 5H6M0 9H6M6 5V13M9 9H13M9 13H13" stroke="#2a5ab0" stroke-width="1" fill="none"/><path d="M5 8L11 2L13 4L7 10Z" fill="#e02020"/><path d="M5 8L4 11L7 10" fill="#333"/></svg>
<svg class="a" style="left:679px;top:87px" width="14" height="14" viewBox="0 0 14 14"><rect x="0.5" y="9" width="5" height="4.5" fill="#222"/><rect x="1.5" y="10" width="3" height="2" fill="#e02020"/><circle cx="8" cy="5.5" r="4.5" fill="#e8eef8" stroke="#4a6aa0"/><path d="M6 3V8M8 3V8" stroke="#666" stroke-width="0.8"/><path d="M11 9L13.5 12" stroke="#4a6aa0" stroke-width="1.2"/></svg>
<svg class="a" style="left:696px;top:87px" width="14" height="14" viewBox="0 0 14 14"><rect x="0.5" y="9" width="5" height="4.5" fill="#222"/><rect x="1.5" y="10" width="3" height="2" fill="#e02020"/><circle cx="7" cy="6" r="4.5" fill="#e8eef8" stroke="#4a6aa0"/><path d="M6 8L12 1" stroke="#e02020" stroke-width="2.2"/><path d="M10 9L13 12" stroke="#4a6aa0" stroke-width="1.2"/></svg>
<svg class="a" style="left:713px;top:87px" width="14" height="14" viewBox="0 0 14 14"><rect x="0" y="0" width="12" height="7" fill="#2a6ac8"/><text x="6" y="6" font-family="Liberation Sans" font-weight="700" font-size="6" fill="#fff" text-anchor="middle">DM</text><circle cx="9" cy="9.5" r="3" fill="#fff" stroke="#222" stroke-width="1.3"/><path d="M11 11.5L13.5 14" stroke="#222" stroke-width="1.5"/></svg>
<svg class="a" style="left:731px;top:87px" width="14" height="14" viewBox="0 0 14 14"><path d="M0 3H4M2 1V5M4 2H9V6H4ZM9 4H12V13M6 8H12M6 11H12" stroke="#8e949c" stroke-width="1.3" fill="none"/></svg>
<svg class="a" style="left:749px;top:87px" width="14" height="14" viewBox="0 0 14 14"><path d="M1 3H9M9 3H12V13M5 8H12M5 11H12" stroke="#8e949c" stroke-width="1.3" fill="none"/></svg>
<div class="a" style="left:766px;top:83px;width:9px;height:20px;background:linear-gradient(#c8d0dc,#bcc6d4);border-radius:0 2px 2px 0"></div>
<svg class="a" style="left:767px;top:96px" width="7" height="6" viewBox="0 0 7 6"><path d="M1 0.5H6" stroke="#222"/><path d="M0.5 2.5H6.5L3.5 5.5Z" fill="#222"/></svg>
<div class="a" style="left:8px;top:104px;width:166px;height:16px;background:linear-gradient(#4d6187,#41557a);border-radius:0 3px 0 0"></div>
<div class="a" style="left:8px;top:120px;width:164px;height:1.5px;background:#7a8494"></div>
<div class="t" style="left:10.8px;top:108.34px;font-size:9.4px;color:#e6ecf5">Navigation</div>
<svg class="a" style="left:149.5px;top:107.5px" width="7" height="10" viewBox="0 0 7 10"><rect x="1.5" y="0.5" width="4" height="5" fill="#cdd6e4"/><path d="M0 5.8H7" stroke="#cdd6e4" stroke-width="1.2"/><path d="M3.5 6V10" stroke="#cdd6e4" stroke-width="1"/></svg>
<svg class="a" style="left:162px;top:107.6px" width="8" height="7.5" viewBox="0 0 8 7.5"><path d="M0.8 0.8L7.2 6.7M7.2 0.8L0.8 6.7" stroke="#d4dce8" stroke-width="1.2"/></svg>
<div class="a" style="left:8px;top:121.5px;width:164px;height:21.5px;background:linear-gradient(#b8c2d1,#b2bdcd);border-left:1px solid #d0d8e4"></div>
<svg class="a" style="left:15px;top:126px" width="18" height="12" viewBox="0 0 18 12"><rect x="0.5" y="0.5" width="4" height="4" fill="#eee" stroke="#444" stroke-width="0.8"/><path d="M4.5 2.5H8M6.5 4V11H9" stroke="#222" stroke-width="0.9" fill="none"/><path d="M6.5 4.5L8.5 6.5H4.5ZM6.5 10.5L8.5 8.5H4.5Z" fill="#d02020"/><path d="M12 5H16L14 7Z" fill="#222"/></svg>
<div class="a" style="left:37px;top:126px;width:1px;height:13px;background:#8a96a8;box-shadow:1px 0 0 #e4eaf2"></div>
<svg class="a" style="left:42px;top:126px" width="13" height="10" viewBox="0 0 13 10"><rect x="0.5" y="0.5" width="4" height="4" fill="#eee" stroke="#444" stroke-width="0.8"/><path d="M4.5 2.5H11M6.5 2.5V8.5H11" stroke="#222" stroke-width="1" fill="none"/></svg>
<div class="a" style="left:8px;top:143px;width:164px;height:607px;background:#3d4d6b;border-left:1px solid #6a7a96"></div>
<svg class="a" style="left:12.5px;top:145.0px" width="13" height="13" viewBox="0 0 13 13"><rect x="3" y="0.5" width="4" height="6" fill="#9a9a9a"/><rect x="1" y="3" width="4" height="9" fill="#e04040"/><rect x="5" y="4" width="3" height="8" fill="#d0d0d0"/><rect x="8" y="3" width="3" height="9" fill="#fff"/><path d="M2 5H4M2 8H4" stroke="#fff" stroke-width="0.6"/></svg>
<div class="t" style="left:28.6px;top:145.84px;font-size:9.4px;color:#e8edf5">Project</div>
<svg class="a" style="left:23.6px;top:160.12px" width="13" height="13" viewBox="0 0 13 13"><rect x="0" y="0" width="13" height="12" fill="#111"/><rect x="1" y="1" width="11" height="1.5" fill="#ddd"/><rect x="1" y="3" width="5" height="8" fill="#e04848"/><rect x="7" y="3" width="5" height="8" fill="#40a040"/><path d="M3 4V10M9.5 4V10" stroke="#f4f4f4" stroke-width="0.8"/></svg>
<div class="t" style="left:39.7px;top:160.96px;font-size:9.4px;color:#e8edf5">Module Configuration</div>
<div class="a" style="left:11.3px;top:178.74px;width:8px;height:8px;background:linear-gradient(#f4f4f4,#c8ccd2);border:1px solid #8a93a3"></div>
<div class="a" style="left:13.3px;top:182.24px;width:4px;height:1px;background:#333"></div>
<svg class="a" style="left:23.6px;top:175.24px" width="13" height="13" viewBox="0 0 13 13"><path d="M0.5 3H5L6 4H12V12H0.5Z" fill="#e8b040" stroke="#9a7020" stroke-width="0.7"/><rect x="2" y="1" width="4" height="8" fill="#333"/><path d="M7 10L12 2" stroke="#2a5ab0" stroke-width="2"/><path d="M1 6H12V12H1Z" fill="#f8d070" opacity="0.85"/></svg>
<div class="t" style="left:39.7px;top:176.08px;font-size:9.4px;color:#e8edf5">Program</div>
<svg class="a" style="left:34.7px;top:190.36px" width="13" height="13" viewBox="0 0 13 13"><path d="M0.5 4H12.5V12H0.5Z" fill="#e8b040" stroke="#9a7020" stroke-width="0.7"/><rect x="3" y="1" width="3" height="10" fill="#e04848"/><rect x="6" y="0.5" width="3" height="10.5" fill="#f4f4f4"/><rect x="9" y="2" width="2.5" height="9" fill="#d04040"/><path d="M1 8H12V12H1Z" fill="#f8d070" opacity="0.7"/></svg>
<div class="t" style="left:50.8px;top:191.20px;font-size:9.4px;color:#e8edf5">Initial</div>
<div class="a" style="left:22.4px;top:208.98px;width:8px;height:8px;background:linear-gradient(#f4f4f4,#c8ccd2);border:1px solid #8a93a3"></div>
<div class="a" style="left:24.4px;top:212.48px;width:4px;height:1px;background:#333"></div>
<svg class="a" style="left:34.7px;top:205.48px" width="13" height="13" viewBox="0 0 13 13"><path d="M0.5 4H12.5V12H0.5Z" fill="#e8b040" stroke="#9a7020" stroke-width="0.7"/><rect x="3" y="1" width="3" height="10" fill="#e04848"/><rect x="6" y="0.5" width="3" height="10.5" fill="#f4f4f4"/><rect x="9" y="2" width="2.5" height="9" fill="#d04040"/><path d="M1 8H12V12H1Z" fill="#f8d070" opacity="0.7"/></svg>
<div class="t" style="left:50.8px;top:206.32px;font-size:9.4px;color:#e8edf5">Scan</div>
<div class="a" style="left:33.5px;top:224.1px;width:8px;height:8px;background:linear-gradient(#f4f4f4,#c8ccd2);border:1px solid #8a93a3"></div>
<div class="a" style="left:35.5px;top:227.6px;width:4px;height:1px;background:#333"></div>
<svg class="a" style="left:45.8px;top:220.6px" width="13" height="13" viewBox="0 0 13 13"><rect x="1" y="3" width="5" height="9" fill="#222"/><rect x="2" y="5" width="3" height="2" fill="#40a040"/><rect x="6" y="0.5" width="6" height="7" fill="#f4f4f4" stroke="#555" stroke-width="0.6"/><path d="M7.5 4L9 3V5ZM10.5 4L9 3V5Z" fill="#d02020"/><path d="M0 8H6" stroke="#40a040" stroke-width="1.2"/></svg>
<div class="t" style="left:61.9px;top:221.44px;font-size:9.4px;color:#e8edf5">MAIN</div>
<div class="a" style="left:44.599999999999994px;top:239.22px;width:8px;height:8px;background:linear-gradient(#f4f4f4,#c8ccd2);border:1px solid #8a93a3"></div>
<div class="a" style="left:46.599999999999994px;top:242.72px;width:4px;height:1px;background:#333"></div>
<svg class="a" style="left:56.9px;top:235.72px" width="13" height="13" viewBox="0 0 13 13"><path d="M0.5 4H12.5V12H0.5Z" fill="#e8b040" stroke="#9a7020" stroke-width="0.7"/><path d="M3 0.5H9L11 2.5V10H3Z" fill="#fff" stroke="#555" stroke-width="0.6"/><path d="M4.5 5.5L7 3.8V7.2ZM9.5 5.5L7 3.8V7.2Z" fill="#d02020"/></svg>
<div class="t" style="left:73.0px;top:236.56px;font-size:9.4px;color:#e8edf5">ProgPou</div>
<svg class="a" style="left:68.0px;top:250.83999999999997px" width="13" height="13" viewBox="0 0 13 13"><rect x="1" y="0.5" width="7" height="5" rx="1" fill="#cfe0f4" stroke="#3a6ab0" stroke-width="0.7"/><rect x="3" y="5" width="10" height="7" fill="#e8f0f8" stroke="#3a6ab0" stroke-width="0.7"/><path d="M3 7.5H13M3 9.8H13M6.5 5V12" stroke="#3a6ab0" stroke-width="0.8"/><rect x="0.5" y="4" width="3" height="8" fill="#fff" stroke="#3a6ab0" stroke-width="0.5"/></svg>
<div class="t" style="left:84.1px;top:251.68px;font-size:9.4px;color:#e8edf5">Local Label</div>
<div class="a" style="left:10px;top:264.1px;width:135px;height:14.5px;background:#f3e4a4"></div>
<svg class="a" style="left:68.0px;top:265.96px" width="13" height="13" viewBox="0 0 13 13"><path d="M1.5 0.5H8L10.5 3V12.5H1.5Z" fill="#fff" stroke="#555" stroke-width="0.7"/><path d="M2.5 6.5L6 4V9ZM9.5 6.5L6 4V9Z" fill="#d02020"/></svg>
<div class="t" style="left:84.1px;top:266.80px;font-size:9.4px;color:#1a1a1a">Program</div>
<svg class="a" style="left:34.7px;top:281.08px" width="13" height="13" viewBox="0 0 13 13"><path d="M0.5 4H12.5V12H0.5Z" fill="#e8b040" stroke="#9a7020" stroke-width="0.7"/><rect x="3" y="1" width="3" height="10" fill="#e04848"/><rect x="6" y="0.5" width="3" height="10.5" fill="#f4f4f4"/><rect x="9" y="2" width="2.5" height="9" fill="#d04040"/><path d="M1 8H12V12H1Z" fill="#f8d070" opacity="0.7"/></svg>
<div class="t" style="left:50.8px;top:281.92px;font-size:9.4px;color:#e8edf5">Fixed Scan</div>
<svg class="a" style="left:34.7px;top:296.2px" width="13" height="13" viewBox="0 0 13 13"><path d="M0.5 4H12.5V12H0.5Z" fill="#e8b040" stroke="#9a7020" stroke-width="0.7"/><rect x="3" y="1" width="3" height="10" fill="#e04848"/><rect x="6" y="0.5" width="3" height="10.5" fill="#f4f4f4"/><rect x="9" y="2" width="2.5" height="9" fill="#d04040"/><path d="M1 8H12V12H1Z" fill="#f8d070" opacity="0.7"/></svg>
<div class="t" style="left:50.8px;top:297.04px;font-size:9.4px;color:#e8edf5">Event</div>
<svg class="a" style="left:34.7px;top:311.32px" width="13" height="13" viewBox="0 0 13 13"><path d="M0.5 4H12.5V12H0.5Z" fill="#e8b040" stroke="#9a7020" stroke-width="0.7"/><rect x="3" y="1" width="3" height="10" fill="#e04848"/><rect x="6" y="0.5" width="3" height="10.5" fill="#f4f4f4"/><rect x="9" y="2" width="2.5" height="9" fill="#d04040"/><path d="M1 8H12V12H1Z" fill="#f8d070" opacity="0.7"/></svg>
<div class="t" style="left:50.8px;top:312.16px;font-size:9.4px;color:#e8edf5">Standby</div>
<svg class="a" style="left:34.7px;top:326.44px" width="13" height="13" viewBox="0 0 13 13"><path d="M0.5 4H12.5V12H0.5Z" fill="#e8b040" stroke="#9a7020" stroke-width="0.7"/><rect x="3" y="1" width="3" height="10" fill="#e04848"/><rect x="6" y="0.5" width="3" height="10.5" fill="#f4f4f4"/><rect x="9" y="2" width="2.5" height="9" fill="#d04040"/><path d="M1 8H12V12H1Z" fill="#f8d070" opacity="0.7"/></svg>
<div class="t" style="left:50.8px;top:327.28px;font-size:9.4px;color:#e8edf5">No Execution Type</div>
<svg class="a" style="left:34.7px;top:341.56px" width="13" height="13" viewBox="0 0 13 13"><path d="M0.5 4H12.5V12H0.5Z" fill="#e8b040" stroke="#9a7020" stroke-width="0.7"/><path d="M3 0.5H9L11 2.5V10H3Z" fill="#dde4ee" stroke="#667" stroke-width="0.6"/><path d="M4 3.5H8M4 5.5H9" stroke="#889" stroke-width="0.7"/><path d="M1 8H12V12H1Z" fill="#f8d070" opacity="0.8"/></svg>
<div class="t" style="left:50.8px;top:342.40px;font-size:9.4px;color:#e8edf5">Unregistered Program</div>
<svg class="a" style="left:23.6px;top:356.67999999999995px" width="13" height="13" viewBox="0 0 13 13"><path d="M0.5 3H5L6 4H12.5V12H0.5Z" fill="#e8b040" stroke="#9a7020" stroke-width="0.7"/><rect x="2" y="1" width="10" height="6" fill="#5aa0d0"/><path d="M1 6H12.5V12H1Z" fill="#40a040"/><rect x="3" y="7" width="6" height="3" fill="#a0e0a0"/></svg>
<div class="t" style="left:39.7px;top:357.52px;font-size:9.4px;color:#e8edf5">FB/FUN</div>
<div class="a" style="left:11.3px;top:375.29999999999995px;width:8px;height:8px;background:linear-gradient(#f4f4f4,#c8ccd2);border:1px solid #8a93a3"></div>
<div class="a" style="left:13.3px;top:378.79999999999995px;width:4px;height:1px;background:#333"></div>
<div class="a" style="left:14.8px;top:377.29999999999995px;width:1px;height:4px;background:#333"></div>
<svg class="a" style="left:23.6px;top:371.79999999999995px" width="13" height="13" viewBox="0 0 13 13"><path d="M0.5 4H12.5V12H0.5Z" fill="#e8b040" stroke="#9a7020" stroke-width="0.7"/><rect x="3" y="1" width="9" height="9" fill="#e8f0f8" stroke="#3a6ab0" stroke-width="0.7"/><path d="M3 4H12M3 6.5H12M6.5 1V10" stroke="#3a6ab0" stroke-width="0.8"/></svg>
<div class="t" style="left:39.7px;top:372.64px;font-size:9.4px;color:#e8edf5">Label</div>
<div class="a" style="left:11.3px;top:390.41999999999996px;width:8px;height:8px;background:linear-gradient(#f4f4f4,#c8ccd2);border:1px solid #8a93a3"></div>
<div class="a" style="left:13.3px;top:393.91999999999996px;width:4px;height:1px;background:#333"></div>
<div class="a" style="left:14.8px;top:392.41999999999996px;width:1px;height:4px;background:#333"></div>
<svg class="a" style="left:23.6px;top:386.91999999999996px" width="13" height="13" viewBox="0 0 13 13"><path d="M0.5 4H12.5V12H0.5Z" fill="#e8b040" stroke="#9a7020" stroke-width="0.7"/><rect x="2" y="1" width="10" height="9" fill="#d8c890"/><path d="M3 3L6 5L9 2L11 6" stroke="#40a040" stroke-width="1.2" fill="none"/><path d="M1 7H12V12H1Z" fill="#f0d8a0" opacity="0.9"/></svg>
<div class="t" style="left:39.7px;top:387.76px;font-size:9.4px;color:#e8edf5">Device</div>
<div class="a" style="left:11.3px;top:405.53999999999996px;width:8px;height:8px;background:linear-gradient(#f4f4f4,#c8ccd2);border:1px solid #8a93a3"></div>
<div class="a" style="left:13.3px;top:409.03999999999996px;width:4px;height:1px;background:#333"></div>
<div class="a" style="left:14.8px;top:407.53999999999996px;width:1px;height:4px;background:#333"></div>
<svg class="a" style="left:23.6px;top:402.03999999999996px" width="13" height="13" viewBox="0 0 13 13"><path d="M0.5 4H12.5V12H0.5Z" fill="#e8b040" stroke="#9a7020" stroke-width="0.7"/><rect x="2" y="1" width="11" height="8" fill="#222"/><path d="M2 8L5 4L8 7L13 3V9H2Z" fill="#40a040"/><rect x="2" y="1" width="11" height="3" fill="#80b0e0"/></svg>
<div class="t" style="left:39.7px;top:402.88px;font-size:9.4px;color:#e8edf5">Parameter</div>
<div class="a" style="left:8px;top:749px;width:164px;height:2px;background:#eef2f8"></div>
<div class="a" style="left:172px;top:120px;width:2px;height:630px;background:linear-gradient(90deg,#c8d6ee,#e4ecf8)"></div>
<div class="a" style="left:174px;top:104px;width:839px;height:17px;background:#2b3a57"></div>
<svg class="a" style="left:181px;top:106px" width="14" height="13" viewBox="0 0 14 13"><rect x="2" y="0.5" width="6" height="5" rx="1" fill="#cfe0f4" stroke="#6a9ad0" stroke-width="0.7"/><rect x="4" y="4" width="9.5" height="8.5" fill="#e8f0f8" stroke="#4a7ac0" stroke-width="0.7"/><path d="M4 6.8H13.5M4 9.6H13.5M7.2 4V12.5" stroke="#4a7ac0" stroke-width="0.9"/><rect x="0.5" y="3" width="3.5" height="9.5" fill="#fff" stroke="#6a9ad0" stroke-width="0.5"/></svg>
<div class="t" style="left:197px;top:108.58px;font-size:9.0px;color:#e4e9f2">ProgPou [PRG] [Local Label Set...</div>
<div class="a" style="left:353px;top:104px;width:145px;height:18px;background:linear-gradient(#fdf3d8,#f8e4b4);border-radius:2px 2px 0 0"></div>
<svg class="a" style="left:357px;top:106px" width="12" height="13" viewBox="0 0 12 13"><path d="M0.5 0.5H8L11.5 4V12.5H0.5Z" fill="#fff" stroke="#666" stroke-width="0.8"/><path d="M1.5 7L5.5 4.5V9.5ZM10 7L6 4.5V9.5Z" fill="#d02020"/></svg>
<div class="t" style="left:372.5px;top:108.58px;font-size:9.0px;color:#1a1a1a">ProgPou [PRG] [LD] 2Step</div>
<svg class="a" style="left:486px;top:109px" width="7" height="7" viewBox="0 0 7 7"><path d="M0.5 0.5L6.5 6.5M6.5 0.5L0.5 6.5" stroke="#333" stroke-width="1"/></svg>
<svg class="a" style="left:982px;top:108px" width="6" height="8" viewBox="0 0 6 8"><path d="M5 0.5V7.5L0.8 4Z" fill="none" stroke="#aab4c4" stroke-width="0.9"/></svg>
<svg class="a" style="left:993px;top:108px" width="6" height="8" viewBox="0 0 6 8"><path d="M1 0.5V7.5L5.2 4Z" fill="none" stroke="#aab4c4" stroke-width="0.9"/></svg>
<svg class="a" style="left:1003px;top:112px" width="7" height="4" viewBox="0 0 7 4"><path d="M0 0H6.5L3.25 3.5Z" fill="#e8ecf4"/></svg>
<div class="a" style="left:174px;top:121px;width:4px;height:410px;background:#2f3d55"></div>
<div class="a" style="left:178px;top:121px;width:835px;height:410px;background:#f6e2ae"></div>
<div class="a" style="left:1012px;top:104px;width:3px;height:430px;background:#b4cce5"></div>
<div class="a" style="left:179px;top:125px;width:830px;height:403px;background:linear-gradient(90deg,#8a8474,#858585 2px,#858585 3px,#999 100%)"></div>
<div class="a" style="left:178px;top:125px;width:1px;height:403px;background:#cfc4b4"></div>
<div class="a" style="left:181px;top:127px;width:828px;height:400px;background:#ebebeb;border-left:1px solid #f4f4f4"></div>
<div class="a" style="left:182px;top:128px;width:49px;height:16px;background:#d4e3f2"></div>
<div class="t" style="left:184.2px;top:131.52px;font-size:8.6px;color:#111">Write</div>
<div class="a" style="left:231px;top:128px;width:38px;height:16px;background:#d4e3f2;border-left:1px dotted #f0f6fc"></div>
<svg class="a" style="left:259px;top:134px" width="6" height="4" viewBox="0 0 6 4"><path d="M0.5 0.5H5.5L3 3Z" fill="#6a7a90"/></svg>
<div class="a" style="left:268.70px;top:128px;width:55.74px;height:16px;background:linear-gradient(#f4f8fc,#e2ecf6 45%,#cfe0f2 55%,#c2d6ee);border-right:1px solid #8aa8cc;border-bottom:1px solid #9ab6d6"></div>
<div class="t" style="left:268.70px;top:132px;width:55.74px;text-align:center;font-size:9px;color:#111">1</div>
<div class="a" style="left:324.44px;top:128px;width:55.74px;height:16px;background:linear-gradient(#f4f8fc,#e2ecf6 45%,#cfe0f2 55%,#c2d6ee);border-right:1px solid #8aa8cc;border-bottom:1px solid #9ab6d6"></div>
<div class="t" style="left:324.44px;top:132px;width:55.74px;text-align:center;font-size:9px;color:#111">2</div>
<div class="a" style="left:380.18px;top:128px;width:55.74px;height:16px;background:linear-gradient(#f4f8fc,#e2ecf6 45%,#cfe0f2 55%,#c2d6ee);border-right:1px solid #8aa8cc;border-bottom:1px solid #9ab6d6"></div>
<div class="t" style="left:380.18px;top:132px;width:55.74px;text-align:center;font-size:9px;color:#111">3</div>
<div class="a" style="left:435.92px;top:128px;width:55.74px;height:16px;background:linear-gradient(#f4f8fc,#e2ecf6 45%,#cfe0f2 55%,#c2d6ee);border-right:1px solid #8aa8cc;border-bottom:1px solid #9ab6d6"></div>
<div class="t" style="left:435.92px;top:132px;width:55.74px;text-align:center;font-size:9px;color:#111">4</div>
<div class="a" style="left:491.66px;top:128px;width:55.74px;height:16px;background:linear-gradient(#f4f8fc,#e2ecf6 45%,#cfe0f2 55%,#c2d6ee);border-right:1px solid #8aa8cc;border-bottom:1px solid #9ab6d6"></div>
<div class="t" style="left:491.66px;top:132px;width:55.74px;text-align:center;font-size:9px;color:#111">5</div>
<div class="a" style="left:547.40px;top:128px;width:55.74px;height:16px;background:linear-gradient(#f4f8fc,#e2ecf6 45%,#cfe0f2 55%,#c2d6ee);border-right:1px solid #8aa8cc;border-bottom:1px solid #9ab6d6"></div>
<div class="t" style="left:547.40px;top:132px;width:55.74px;text-align:center;font-size:9px;color:#111">6</div>
<div class="a" style="left:603.14px;top:128px;width:55.74px;height:16px;background:linear-gradient(#f4f8fc,#e2ecf6 45%,#cfe0f2 55%,#c2d6ee);border-right:1px solid #8aa8cc;border-bottom:1px solid #9ab6d6"></div>
<div class="t" style="left:603.14px;top:132px;width:55.74px;text-align:center;font-size:9px;color:#111">7</div>
<div class="a" style="left:658.88px;top:128px;width:55.74px;height:16px;background:linear-gradient(#f4f8fc,#e2ecf6 45%,#cfe0f2 55%,#c2d6ee);border-right:1px solid #8aa8cc;border-bottom:1px solid #9ab6d6"></div>
<div class="t" style="left:658.88px;top:132px;width:55.74px;text-align:center;font-size:9px;color:#111">8</div>
<div class="a" style="left:714.62px;top:128px;width:55.74px;height:16px;background:linear-gradient(#f4f8fc,#e2ecf6 45%,#cfe0f2 55%,#c2d6ee);border-right:1px solid #8aa8cc;border-bottom:1px solid #9ab6d6"></div>
<div class="t" style="left:714.62px;top:132px;width:55.74px;text-align:center;font-size:9px;color:#111">9</div>
<div class="a" style="left:770.36px;top:128px;width:55.74px;height:16px;background:linear-gradient(#f4f8fc,#e2ecf6 45%,#cfe0f2 55%,#c2d6ee);border-right:1px solid #8aa8cc;border-bottom:1px solid #9ab6d6"></div>
<div class="t" style="left:770.36px;top:132px;width:55.74px;text-align:center;font-size:9px;color:#111">10</div>
<div class="a" style="left:826.10px;top:128px;width:55.74px;height:16px;background:linear-gradient(#f4f8fc,#e2ecf6 45%,#cfe0f2 55%,#c2d6ee);border-right:1px solid #8aa8cc;border-bottom:1px solid #9ab6d6"></div>
<div class="t" style="left:826.10px;top:132px;width:55.74px;text-align:center;font-size:9px;color:#111">11</div>
<div class="a" style="left:881.84px;top:128px;width:55.74px;height:16px;background:linear-gradient(#f4f8fc,#e2ecf6 45%,#cfe0f2 55%,#c2d6ee);border-right:1px solid #8aa8cc;border-bottom:1px solid #9ab6d6"></div>
<div class="t" style="left:881.84px;top:132px;width:55.74px;text-align:center;font-size:9px;color:#111">12</div>
<div class="a" style="left:182px;top:144px;width:11.5px;height:34px;background:linear-gradient(#eef4fa,#c8daf0);border-right:1px solid #7a9ac0;border-bottom:1px solid #9ab0cc"></div>
<div class="t" style="left:184px;top:157.88px;font-size:9px;color:#111">1</div>
<div class="a" style="left:193.5px;top:144px;width:37.8px;height:34px;background:#fff"></div>
<div class="a" style="left:231.3px;top:144px;width:37.4px;height:34px;background:#9ecdd9"></div>
<div class="t" style="left:256.8px;top:157.73px;font-size:9.3px;color:#111">(0)</div>
<div class="a" style="left:324.44px;top:144px;width:55.74px;height:34px;background:#fff;border-left:1px dotted #d0d0d0"></div>
<div class="a" style="left:380.18px;top:144px;width:55.74px;height:34px;background:#fff;border-left:1px dotted #d0d0d0"></div>
<div class="a" style="left:435.92px;top:144px;width:55.74px;height:34px;background:#fff;border-left:1px dotted #d0d0d0"></div>
<div class="a" style="left:491.66px;top:144px;width:55.74px;height:34px;background:#fff;border-left:1px dotted #d0d0d0"></div>
<div class="a" style="left:547.40px;top:144px;width:55.74px;height:34px;background:#fff;border-left:1px dotted #d0d0d0"></div>
<div class="a" style="left:603.14px;top:144px;width:55.74px;height:34px;background:#fff;border-left:1px dotted #d0d0d0"></div>
<div class="a" style="left:658.88px;top:144px;width:55.74px;height:34px;background:#fff;border-left:1px dotted #d0d0d0"></div>
<div class="a" style="left:714.62px;top:144px;width:55.74px;height:34px;background:#fff;border-left:1px dotted #d0d0d0"></div>
<div class="a" style="left:770.36px;top:144px;width:55.74px;height:34px;background:#fff;border-left:1px dotted #d0d0d0"></div>
<div class="a" style="left:826.10px;top:144px;width:55.74px;height:34px;background:#fff;border-left:1px dotted #d0d0d0"></div>
<div class="a" style="left:881.84px;top:144px;width:55.74px;height:34px;background:#fff;border-left:1px dotted #d0d0d0"></div>
<div class="a" style="left:193.5px;top:177px;width:744px;height:1px;border-top:1px dotted #c8c8c8"></div>
<div class="a" style="left:268.7px;top:144px;width:55.7px;height:34px;background:#9ecdd9;border:2px solid #1c3a7e"></div>
<svg class="a" style="left:270px;top:170px" width="8" height="8" viewBox="0 0 8 8"><path d="M0.5 2L5.2 1L2.5 6.8H0.5Z" fill="#3a78c8"/><path d="M3.6 6.8L6.6 2" stroke="#e8f6ff" stroke-width="1.3"/></svg>
<div class="a" style="left:270.7px;top:160px;width:621.8px;height:1.2px;background:#111"></div>
<div class="a" style="left:925.5px;top:160px;width:11px;height:1.2px;background:#111"></div>
<div class="t" style="left:895.5px;top:156.13px;font-size:9.3px;color:#111;letter-spacing:-0.2px">END</div>
<svg class="a" style="left:891.5px;top:155px" width="5" height="11" viewBox="0 0 5 11"><path d="M3.5 0.5H1.5V10.5H3.5" stroke="#111" stroke-width="1" fill="none"/></svg>
<svg class="a" style="left:922.5px;top:155px" width="5" height="11" viewBox="0 0 5 11"><path d="M1.5 0.5H3.5V10.5H1.5" stroke="#111" stroke-width="1" fill="none"/></svg>
<div class="a" style="left:936px;top:144px;width:1.4px;height:35px;background:#3a3a3a"></div>
<div class="a" style="left:995px;top:128px;width:13px;height:386px;background:#ebebeb;border-left:1px solid #d8d8d8"></div>
<div class="a" style="left:1008px;top:127px;width:4px;height:400px;background:linear-gradient(90deg,#f0f0ee,#f8f0e0)"></div>
<div class="a" style="left:1012px;top:125px;width:1.2px;height:405px;background:#4a5a6a"></div>
<div class="a" style="left:995.5px;top:128px;width:11.5px;height:4.5px;background:linear-gradient(#e4f0fa,#9ab8d8);border:1px solid #8098b8;border-top:none;border-radius:0 0 2px 2px"></div>
<svg class="a" style="left:998.5px;top:138.5px" width="7" height="4" viewBox="0 0 7 4"><path d="M0.5 3.5L3.5 0.3L6.5 3.5Z" fill="#7a7a7a"/></svg>
<svg class="a" style="left:998px;top:503px" width="7" height="5" viewBox="0 0 7 5"><path d="M0.5 0.5L3.5 4.5L6.5 0.5Z" fill="#8a8a8a"/></svg>
<div class="a" style="left:182px;top:514px;width:813px;height:12px;background:#ebebeb;border-top:1px solid #f8f8f8"></div>
<svg class="a" style="left:186px;top:517px" width="5" height="7" viewBox="0 0 5 7"><path d="M4.5 0.5L0.5 3.5L4.5 6.5Z" fill="#8a8a8a"/></svg>
<svg class="a" style="left:979px;top:517px" width="5" height="7" viewBox="0 0 5 7"><path d="M0.5 0.5L4.5 3.5L0.5 6.5Z" fill="#8a8a8a"/></svg>
<div class="a" style="left:989px;top:514px;width:6px;height:12px;background:linear-gradient(90deg,#dfeaf6,#a4c0e0);border:1px solid #8aa0c0;border-radius:2px"></div>
<div class="a" style="left:174px;top:526px;width:838px;height:8px;background:#f6e2ae"></div>
<div class="a" style="left:177px;top:534px;width:833px;height:19px;background:linear-gradient(#4e6389,#40547a)"></div>
<div class="t" style="left:180.7px;top:541.73px;font-size:9.3px;color:#e8edf5">Element Selection</div>
<svg class="a" style="left:988px;top:537px" width="8" height="11" viewBox="0 0 8 11"><path d="M2.5 0.5H5.5V5H6.5V6H1.5V5H2.5Z M4 6V10" stroke="#dfe6f0" stroke-width="1" fill="none"/></svg>
<svg class="a" style="left:1001px;top:539px" width="8" height="8" viewBox="0 0 8 8"><path d="M0.5 0.5L7.5 7.5M7.5 0.5L0.5 7.5" stroke="#dfe6f0" stroke-width="1.2"/></svg>
<div class="a" style="left:177px;top:553px;width:833px;height:22px;background:linear-gradient(#bcc7d6,#b0bccc);border-bottom:1px solid #6a7a90"></div>
<div class="a" style="left:180.5px;top:555.5px;width:158.5px;height:15.5px;background:#fff"></div>
<div class="t" style="left:183.5px;top:559.63px;font-size:9.3px;color:#6a6a6a">(Find POU)</div>
<svg class="a" style="left:342px;top:557px" width="14" height="13" viewBox="0 0 14 13"><path d="M1 5L3 1H5.5V11H1ZM7.5 1H10L12 5V11H7.5Z" fill="#8a9098"/><rect x="5" y="3" width="3" height="4" fill="#8a9098"/><path d="M0 8L3 6V10Z" fill="#8a9098"/></svg>
<svg class="a" style="left:359px;top:557px" width="14" height="13" viewBox="0 0 14 13"><path d="M1 5L3 1H5.5V11H1ZM7.5 1H10L12 5V11H7.5Z" fill="#8a9098"/><rect x="5" y="3" width="3" height="4" fill="#8a9098"/><path d="M14 8L11 6V10Z" fill="#8a9098"/></svg>
<div class="a" style="left:376px;top:557px;width:1px;height:13px;background:#8a96a8;box-shadow:1px 0 0 #dfe6ee"></div>
<svg class="a" style="left:382px;top:557px" width="13" height="13" viewBox="0 0 13 13"><path d="M6.5 0.8L8.3 4.6L12.3 5L9.3 7.8L10.1 11.8L6.5 9.8L2.9 11.8L3.7 7.8L0.7 5L4.7 4.6Z" fill="#dfe3e8" stroke="#8a9098" stroke-width="0.9"/></svg>
<svg class="a" style="left:399px;top:557px" width="14" height="13" viewBox="0 0 14 13"><path d="M0.5 3.5H5L6 4.5H13V12H0.5Z" fill="#d8dce2" stroke="#8a9098" stroke-width="0.9"/><path d="M6 1H8M7 0V2" stroke="#8a9098"/></svg>
<svg class="a" style="left:417px;top:557px" width="12" height="12" viewBox="0 0 12 12"><path d="M1 1L11 11M11 1L1 11" stroke="#8a9098" stroke-width="1.6"/></svg>
<div class="a" style="left:434px;top:557px;width:1px;height:13px;background:#8a96a8;box-shadow:1px 0 0 #dfe6ee"></div>
<svg class="a" style="left:439px;top:557px" width="19" height="13" viewBox="0 0 19 13"><rect x="0.5" y="2.5" width="12" height="9" fill="#d8dce2" stroke="#8a9098" stroke-width="0.9"/><path d="M3 9L5 6L7 9M9 4V10" stroke="#8a9098" stroke-width="0.9" fill="none"/><path d="M15 6H18L16.5 8Z" fill="#8a9098"/></svg>
<div class="a" style="left:177px;top:575px;width:833px;height:20px;background:#ececec;border-top:2px solid #e8c09a"></div>
<div class="a" style="left:177px;top:575px;width:4px;height:136px;background:linear-gradient(90deg,#e6e4e0 0,#e6e4e0 1.5px,#f2d6b8 1.5px,#f2d6b8 3.5px,#c8ccd4 3.5px)"></div>
<div class="t" style="left:187px;top:582.13px;font-size:9.3px;color:#111">Display Target:</div>
<div class="a" style="left:265.5px;top:577.5px;width:744px;height:17px;background:linear-gradient(#f2f2f2,#e8e8e8 40%,#d4d4d4 50%,#c9c9c9);border:1px solid #b0b0b0;border-bottom-color:#8a9ab0;border-radius:3px 0 0 0"></div>
<div class="t" style="left:276px;top:582.13px;font-size:9.3px;color:#111">All</div>
<svg class="a" style="left:999px;top:584px" width="7" height="4" viewBox="0 0 7 4"><path d="M0 0H7L3.5 4Z" fill="#111"/></svg>
<div class="a" style="left:180.5px;top:595px;width:829.5px;height:116px;background:#c8ddf2;border-left:1px solid #8a96a8;border-bottom:1px solid #7a9ac0"></div>
<div class="a" style="left:180.5px;top:594.6px;width:829.5px;height:1px;background:#8a96a8"></div>
<div class="a" style="left:181.5px;top:609.6999999999999px;width:815px;height:1.2px;background:#7a889e"></div>
<div class="a" style="left:181.5px;top:625.0px;width:815px;height:1.2px;background:#7a889e"></div>
<div class="a" style="left:181.5px;top:640.3px;width:815px;height:1.2px;background:#7a889e"></div>
<div class="a" style="left:181.5px;top:655.5px;width:815px;height:1.2px;background:#7a889e"></div>
<div class="a" style="left:181.5px;top:670.6px;width:815px;height:1.2px;background:#7a889e"></div>
<div class="a" style="left:181.5px;top:683.6px;width:828px;height:2.4px;background:#3e4e70"></div>
<div class="t" style="left:183.7px;top:599.03px;font-size:9.3px;color:#2e3850;font-weight:700">Sequence Instruction</div>
<div class="t" style="left:193.8px;top:614.23px;font-size:9.3px;color:#2e3850;font-weight:700">Contact Instruction</div>
<div class="t" style="left:193.8px;top:629.43px;font-size:9.3px;color:#2e3850;font-weight:700">Connection Instruction</div>
<div class="t" style="left:193.8px;top:644.63px;font-size:9.3px;color:#2e3850;font-weight:700">Output Instruction</div>
<div class="t" style="left:193.8px;top:659.83px;font-size:9.3px;color:#2e3850;font-weight:700">Shift Instruction</div>
<div class="t" style="left:193.8px;top:675.03px;font-size:9.3px;color:#2e3850;font-weight:700">Master Control Instruction</div>
<div class="a" style="left:996.5px;top:596px;width:13px;height:88px;background:#f0f0f0;border-left:1px solid #d8d8d8"></div>
<svg class="a" style="left:1000px;top:599px" width="6" height="4" viewBox="0 0 6 4"><path d="M0 3.5L3 0.5L6 3.5Z" fill="#333"/></svg>
<div class="a" style="left:997.5px;top:609px;width:11px;height:13px;background:linear-gradient(90deg,#f8f8f8,#dcdcdc);border:1px solid #8a8a8a;border-radius:1px"></div>
<svg class="a" style="left:1000px;top:674px" width="6" height="4" viewBox="0 0 6 4"><path d="M0 0.5L3 3.5L6 0.5Z" fill="#333"/></svg>
<div class="a" style="left:177px;top:710px;width:833px;height:22px;background:linear-gradient(#b4cce8 0,#b4cce8 2px,#5a7ab0 2px,#5a7ab0 4px,#eef3fa 4px,#bcd2ec 100%);border-left:3px solid #9aa6b6"></div>
<div class="a" style="left:179.5px;top:711px;width:46px;height:19px;background:linear-gradient(#fce6c4,#f4c88e)"></div>
<div class="t" style="left:183.4px;top:716.53px;font-size:9.3px;color:#111">POU List</div>
<div class="a" style="left:226.4px;top:713px;width:45.2px;height:16.5px;background:linear-gradient(#dce8f6,#bcd0ea);border:1px solid #5a84c0;border-width:0 1.3px 1.3px 1.3px;border-radius:0 0 2px 2px"></div>
<div class="t" style="left:230.4px;top:716.53px;font-size:9.3px;color:#111">Favorites</div>
<div class="a" style="left:273.4px;top:713px;width:38.5px;height:16.5px;background:linear-gradient(#dce8f6,#bcd0ea);border:1px solid #5a84c0;border-width:0 1.3px 1.3px 1.3px;border-radius:0 0 2px 2px"></div>
<div class="t" style="left:277.4px;top:716.53px;font-size:9.3px;color:#111">History</div>
<div class="a" style="left:313.8px;top:713px;width:40.5px;height:16.5px;background:linear-gradient(#dce8f6,#bcd0ea);border:1px solid #5a84c0;border-width:0 1.3px 1.3px 1.3px;border-radius:0 0 2px 2px"></div>
<div class="t" style="left:317.8px;top:716.53px;font-size:9.3px;color:#111">Module</div>
<div class="a" style="left:177px;top:731.5px;width:833px;height:2.5px;background:#fbfcfe"></div>
<div class="a" style="left:177px;top:734px;width:835px;height:17.8px;background:#333f5c"></div>
<svg class="a" style="left:181.5px;top:739px" width="12" height="9" viewBox="0 0 12 9"><rect x="0.5" y="0.5" width="11" height="8" fill="#f0f4f8" stroke="#a0b4cc" stroke-width="0.6"/><rect x="0.5" y="0.5" width="11" height="1.5" fill="#2a4a80"/><path d="M1 4H11M1 6.5H11" stroke="#7a8aa0" stroke-width="1"/></svg>
<div class="t" style="left:196.7px;top:738.13px;font-size:9.3px;color:#e4e9f2">Output</div>
<svg class="a" style="left:234px;top:739px" width="12" height="9" viewBox="0 0 12 9"><rect x="0.5" y="0.5" width="11" height="8" fill="#f0f4f8" stroke="#a0b4cc" stroke-width="0.6"/><path d="M1 3H11M1 5.5H11M4 2V8M7 2V8" stroke="#555" stroke-width="0.8"/></svg>
<div class="t" style="left:249px;top:738.13px;font-size:9.3px;color:#e4e9f2">Progress</div>
<div class="a" style="left:288px;top:734px;width:96.5px;height:16.5px;background:#fff;border-radius:0 0 2px 2px"></div>
<svg class="a" style="left:291.5px;top:738px" width="12" height="10" viewBox="0 0 12 10"><rect x="2.5" y="0.5" width="7" height="9" fill="#666" stroke="#111" stroke-width="1"/><path d="M0 2.5H2.5M0 5H2.5M0 7.5H2.5M9.5 2.5H12M9.5 5H12M9.5 7.5H12" stroke="#111" stroke-width="1.1"/></svg>
<div class="t" style="left:306.5px;top:738.13px;font-size:9.3px;color:#111">Element Selection</div>
<div class="a" style="left:8px;top:751.8px;width:1004px;height:15.7px;background:#2f3a55"></div>
<div class="a" style="left:276.5px;top:753px;width:1px;height:13px;background:#9aa6ba"></div>
<div class="a" style="left:343.5px;top:753px;width:1px;height:13px;background:#9aa6ba"></div>
<div class="a" style="left:537.5px;top:753px;width:1px;height:13px;background:#9aa6ba"></div>
<div class="a" style="left:620.4px;top:753px;width:1px;height:13px;background:#9aa6ba"></div>
<div class="a" style="left:743px;top:753px;width:1px;height:13px;background:#9aa6ba"></div>
<div class="a" style="left:873px;top:753px;width:1px;height:13px;background:#9aa6ba"></div>
<div class="a" style="left:940px;top:753px;width:1px;height:13px;background:#9aa6ba"></div>
<div class="a" style="left:967px;top:753px;width:1px;height:13px;background:#9aa6ba"></div>
<div class="t" style="left:542px;top:756.50px;font-size:9.1px;color:#e4e9f2">R08</div>
<div class="t" style="left:625px;top:756.50px;font-size:9.1px;color:#e4e9f2">Host</div>
<div class="t" style="left:748px;top:756.50px;font-size:9.1px;color:#e4e9f2">0/2 Step</div>
<div class="t" style="left:878px;top:756.50px;font-size:9.1px;color:#e4e9f2">Overwrite</div>
<div class="t" style="left:945px;top:756.50px;font-size:9.1px;color:#6a7890">CAP</div>
<div class="t" style="left:972px;top:756.50px;font-size:9.1px;color:#e4e9f2">NUM</div>
<svg class="a" style="left:1003px;top:758px" width="8" height="8" viewBox="0 0 8 8"><path d="M6 1.5V2.5M4 3.5V4.5M6 3.5V4.5M2 5.5V6.5M4 5.5V6.5M6 5.5V6.5" stroke="#c8d0dc" stroke-width="1.2"/></svg>
<div class="a" style="left:3px;top:767.5px;width:1009px;height:4.8px;background:#a9c4dc"></div>
<div class="a" style="left:0px;top:772.3px;width:1015px;height:1.7px;background:#245e6c"></div>
<div class="a" style="left:0px;top:774px;width:1015px;height:2px;background:#f8f8f8"></div>
<div class="a" style="left:171.3px;top:529.3px;width:843.2px;height:250.2px;border:3px solid #141414;border-radius:9px;box-shadow:0 0 0 1.5px #fff, inset 0 0 0 1.8px #fff"></div>
<div class="t" style="left:866.5px;top:740.95px;font-size:22.5px;color:#f27d14;letter-spacing:1.15px;-webkit-text-stroke:0.45px #e87010">Downyi.com</div>
</body></html>
